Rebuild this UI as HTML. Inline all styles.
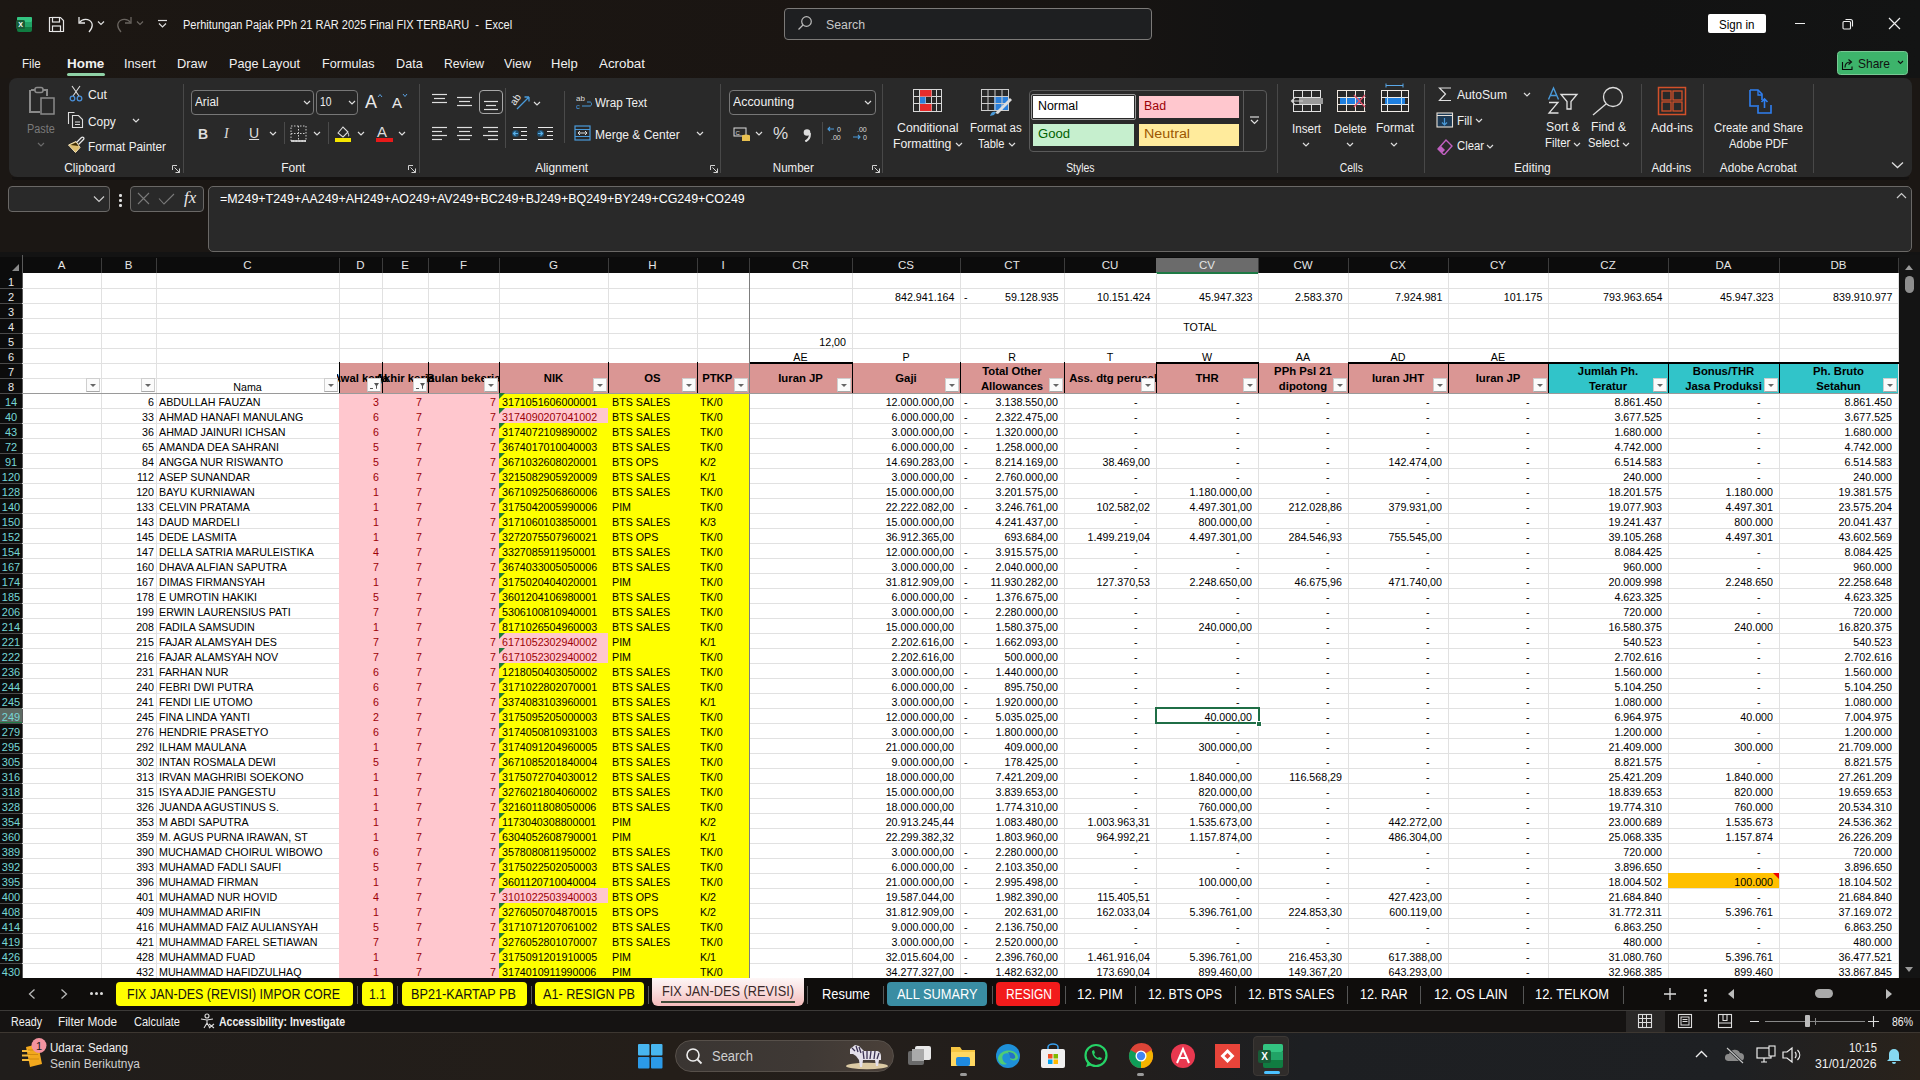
<!DOCTYPE html><html><head><meta charset="utf-8"><title>Excel</title><style>
*{margin:0;padding:0;box-sizing:border-box}
html,body{width:1920px;height:1080px;overflow:hidden;background:#1b1714;font-family:"Liberation Sans",sans-serif}
div,svg{position:absolute}
.t{white-space:nowrap;color:#fff;font-size:12px;line-height:14px}
.g{white-space:nowrap;color:#000;font-size:10.7px;line-height:16px;height:15px;overflow:hidden}
.r{text-align:right}
.c{text-align:center}
.b{font-weight:bold;font-size:11.3px}
.fb{background:#fbfbfb;width:13px;height:13px;border:1px solid #cfcfcf;border-bottom-color:#a8a8a8}
.fb:after{content:"";position:absolute;left:3px;top:4.5px;border-left:3px solid transparent;border-right:3px solid transparent;border-top:3.5px solid #666}
.sep{width:1px;background:#4a4a4a}
.chev{width:6px;height:6px;border-right:1.3px solid #ddd;border-bottom:1.3px solid #ddd;transform:rotate(45deg)}
</style></head><body>
<div style="left:0px;top:0px;width:1920px;height:78px;background:linear-gradient(90deg,#1c1713 0%,#1a1512 45%,#171412 58%,#121212 66%,#121212 85%,#131414 100%)"></div>
<svg style="left:16px;top:16px" width="16" height="16" viewBox="0 0 16 16"><rect x="1" y="1" width="15" height="15" rx="2" fill="#107c41"/><rect x="1" y="1" width="15" height="5" rx="1" fill="#33c481"/><rect x="1" y="6" width="15" height="5" fill="#21a366"/><rect x="0" y="4" width="9" height="9" rx="1.5" fill="#185c37"/><text x="4.5" y="11" font-size="7" font-weight="bold" fill="#fff" text-anchor="middle" font-family="Liberation Sans">X</text></svg>
<svg style="left:48px;top:16px" width="17" height="17" viewBox="0 0 17 17"><path d="M1.5 1.5h11l3 3v11h-14z" fill="none" stroke="#e6e6e6" stroke-width="1.2"/><rect x="4.5" y="1.5" width="7" height="4.5" fill="none" stroke="#e6e6e6" stroke-width="1.2"/><rect x="4.5" y="10" width="8" height="5.5" fill="none" stroke="#e6e6e6" stroke-width="1.2"/></svg>
<svg style="left:77px;top:15px" width="17" height="18" viewBox="0 0 17 18"><path d="M2 2v6h6" fill="none" stroke="#e6e6e6" stroke-width="1.3"/><path d="M2.5 7.5C5 3.5 12 3 14.5 7.5c2 3.5 0 6.5-2.5 9.5" fill="none" stroke="#e6e6e6" stroke-width="1.3"/></svg>
<svg style="left:97px;top:20px" width="8" height="6" viewBox="0 0 8 6"><path d="M1 1.5l3 3 3-3" fill="none" stroke="#ddd" stroke-width="1.2"/></svg>
<svg style="left:116px;top:15px" width="17" height="18" viewBox="0 0 17 18"><path d="M15 2v6H9" fill="none" stroke="#6a6560" stroke-width="1.3"/><path d="M14.5 7.5C12 3.5 5 3 2.5 7.5c-2 3.5 0 6.5 2.5 9.5" fill="none" stroke="#6a6560" stroke-width="1.3"/></svg>
<svg style="left:136px;top:20px" width="8" height="6" viewBox="0 0 8 6"><path d="M1 1.5l3 3 3-3" fill="none" stroke="#6a6560" stroke-width="1.2"/></svg>
<svg style="left:157px;top:19px" width="11" height="10" viewBox="0 0 11 10"><path d="M1 1.5h9" stroke="#ddd" stroke-width="1.2"/><path d="M2 4.5l3.5 3.5 3.5-3.5" fill="none" stroke="#ddd" stroke-width="1.2"/></svg>
<div class="t" style="left:183.00px;top:18.82px;font-size:12px;line-height:12px;color:#f2f2f2;transform:scaleX(0.9194);transform-origin:0 0;">Perhitungan Pajak PPh 21 RAR 2025 Final FIX TERBARU &nbsp;- &nbsp;Excel</div>
<div style="left:784px;top:8px;width:368px;height:32px;border:1px solid #7c7a78;border-radius:4px;background:#1e1f21"></div>
<svg style="left:797px;top:15px" width="16" height="16" viewBox="0 0 16 16"><circle cx="9.5" cy="6.5" r="4.8" fill="none" stroke="#bbb" stroke-width="1.2"/><path d="M6 10L1.5 14.5" stroke="#bbb" stroke-width="1.3"/></svg>
<div class="t" style="left:826.00px;top:18.52px;font-size:12px;line-height:12px;color:#c8c8c8;transform:scaleX(1.0259);transform-origin:0 0;">Search</div>
<div style="left:1708px;top:14px;width:58px;height:19px;background:#fff;border-radius:2px"></div>
<div class="t" style="left:1719.30px;top:18.72px;font-size:12px;line-height:12px;color:#000;transform:scaleX(0.9649);transform-origin:0 0;">Sign in</div>
<div style="left:1795px;top:23px;width:10px;height:1px;background:#eee"></div>
<svg style="left:1842px;top:18px" width="12" height="12" viewBox="0 0 12 12"><rect x="1" y="3.5" width="7.5" height="7.5" rx="1" fill="none" stroke="#eee" stroke-width="1.1"/><path d="M3.5 1.5h5a2 2 0 0 1 2 2v5" fill="none" stroke="#eee" stroke-width="1.1"/></svg>
<svg style="left:1888px;top:17px" width="13" height="13" viewBox="0 0 13 13"><path d="M1 1l11 11M12 1L1 12" stroke="#eee" stroke-width="1.2"/></svg>
<div class="t" style="left:22.00px;top:57.13px;font-size:13px;line-height:13px;color:#f0f0f0;transform:scaleX(0.8925);transform-origin:0 0;">File</div>
<div class="t" style="left:66.70px;top:57.13px;font-size:13px;line-height:13px;color:#f0f0f0;font-weight:bold;transform:scaleX(1.0325);transform-origin:0 0;">Home</div>
<div class="t" style="left:124.00px;top:57.13px;font-size:13px;line-height:13px;color:#f0f0f0;transform:scaleX(0.9749);transform-origin:0 0;">Insert</div>
<div class="t" style="left:177.00px;top:57.13px;font-size:13px;line-height:13px;color:#f0f0f0;transform:scaleX(0.9887);transform-origin:0 0;">Draw</div>
<div class="t" style="left:229.00px;top:57.13px;font-size:13px;line-height:13px;color:#f0f0f0;transform:scaleX(0.9722);transform-origin:0 0;">Page Layout</div>
<div class="t" style="left:322.00px;top:57.13px;font-size:13px;line-height:13px;color:#f0f0f0;transform:scaleX(0.9725);transform-origin:0 0;">Formulas</div>
<div class="t" style="left:396.00px;top:57.13px;font-size:13px;line-height:13px;color:#f0f0f0;transform:scaleX(0.9720);transform-origin:0 0;">Data</div>
<div class="t" style="left:444.00px;top:57.13px;font-size:13px;line-height:13px;color:#f0f0f0;transform:scaleX(0.9381);transform-origin:0 0;">Review</div>
<div class="t" style="left:504.00px;top:57.13px;font-size:13px;line-height:13px;color:#f0f0f0;transform:scaleX(0.9659);transform-origin:0 0;">View</div>
<div class="t" style="left:551.00px;top:57.13px;font-size:13px;line-height:13px;color:#f0f0f0;">Help</div>
<div class="t" style="left:599.00px;top:57.13px;font-size:13px;line-height:13px;color:#f0f0f0;transform:scaleX(1.0265);transform-origin:0 0;">Acrobat</div>
<div style="left:67px;top:73px;width:38px;height:3px;background:#8fd1a6;border-radius:2px"></div>
<div style="left:1837px;top:51px;width:71px;height:24px;background:#3db46b;border-radius:3.5px;border:1px solid #78c994"></div>
<svg style="left:1841px;top:57px" width="14" height="14" viewBox="0 0 14 14"><path d="M1.5 5v7.5h9.5V9.5" fill="none" stroke="#0a0a0a" stroke-width="1.1"/><path d="M4 10.5C4 7 6 5 9.5 5" fill="none" stroke="#0a0a0a" stroke-width="1.1"/><path d="M7.5 2.5l3 2.5-3 2.5" fill="none" stroke="#0a0a0a" stroke-width="1.1"/></svg>
<div class="t" style="left:1858.40px;top:57.23px;font-size:13px;line-height:13px;color:#111;transform:scaleX(0.9221);transform-origin:0 0;">Share</div>
<svg style="left:1897px;top:60px" width="7" height="5" viewBox="0 0 7 5"><path d="M1 1l2.5 2.5L6 1" fill="none" stroke="#111" stroke-width="1.1"/></svg>
<div style="left:9px;top:78px;width:1903px;height:99px;background:#292929;border-radius:8px"></div>
<div style="left:12px;top:177px;width:1897px;height:3px;background:#141211;border-radius:0 0 6px 6px"></div>
<div style="left:183px;top:84px;width:1px;height:89px;background:#484848"></div>
<div style="left:419px;top:84px;width:1px;height:89px;background:#484848"></div>
<div style="left:720px;top:84px;width:1px;height:89px;background:#484848"></div>
<div style="left:882px;top:84px;width:1px;height:89px;background:#484848"></div>
<div style="left:1277px;top:84px;width:1px;height:89px;background:#484848"></div>
<div style="left:1424px;top:84px;width:1px;height:89px;background:#484848"></div>
<div style="left:1641px;top:84px;width:1px;height:89px;background:#484848"></div>
<div style="left:1703px;top:84px;width:1px;height:89px;background:#484848"></div>
<div style="left:1813px;top:84px;width:1px;height:89px;background:#484848"></div>
<div class="t" style="left:63.81px;top:162.22px;font-size:12px;line-height:12px;color:#f0f0f0;transform:scaleX(0.9888);transform-origin:50% 0;">Clipboard</div>
<div class="t" style="left:281.20px;top:162.22px;font-size:12px;line-height:12px;color:#f0f0f0;">Font</div>
<div class="t" style="left:534.82px;top:162.22px;font-size:12px;line-height:12px;color:#f0f0f0;transform:scaleX(0.9933);transform-origin:50% 0;">Alignment</div>
<div class="t" style="left:772.16px;top:162.22px;font-size:12px;line-height:12px;color:#f0f0f0;transform:scaleX(0.9605);transform-origin:50% 0;">Number</div>
<div class="t" style="left:1064.16px;top:162.22px;font-size:12px;line-height:12px;color:#f0f0f0;transform:scaleX(0.8692);transform-origin:50% 0;">Styles</div>
<div class="t" style="left:1337.66px;top:162.22px;font-size:12px;line-height:12px;color:#f0f0f0;transform:scaleX(0.8618);transform-origin:50% 0;">Cells</div>
<div class="t" style="left:1514.06px;top:162.22px;font-size:12px;line-height:12px;color:#f0f0f0;">Editing</div>
<div class="t" style="left:1651.46px;top:162.22px;font-size:12px;line-height:12px;color:#f0f0f0;transform:scaleX(0.9733);transform-origin:50% 0;">Add-ins</div>
<div class="t" style="left:1719.15px;top:162.22px;font-size:12px;line-height:12px;color:#f0f0f0;transform:scaleX(0.9784);transform-origin:50% 0;">Adobe Acrobat</div>
<svg style="left:171px;top:164px" width="10" height="10" viewBox="0 0 10 10"><path d="M1.5 6V1.5H6" fill="none" stroke="#d0d0d0" stroke-width="1"/><path d="M3.5 3.5l5 5M8.5 4.5v4h-4" fill="none" stroke="#d0d0d0" stroke-width="1"/></svg>
<svg style="left:407px;top:164px" width="10" height="10" viewBox="0 0 10 10"><path d="M1.5 6V1.5H6" fill="none" stroke="#d0d0d0" stroke-width="1"/><path d="M3.5 3.5l5 5M8.5 4.5v4h-4" fill="none" stroke="#d0d0d0" stroke-width="1"/></svg>
<svg style="left:709px;top:164px" width="10" height="10" viewBox="0 0 10 10"><path d="M1.5 6V1.5H6" fill="none" stroke="#d0d0d0" stroke-width="1"/><path d="M3.5 3.5l5 5M8.5 4.5v4h-4" fill="none" stroke="#d0d0d0" stroke-width="1"/></svg>
<svg style="left:871px;top:164px" width="10" height="10" viewBox="0 0 10 10"><path d="M1.5 6V1.5H6" fill="none" stroke="#d0d0d0" stroke-width="1"/><path d="M3.5 3.5l5 5M8.5 4.5v4h-4" fill="none" stroke="#d0d0d0" stroke-width="1"/></svg>
<svg style="left:1891px;top:161px" width="13" height="8" viewBox="0 0 13 8"><path d="M1 1.5l5.5 5 5.5-5" fill="none" stroke="#ddd" stroke-width="1.3"/></svg>
<svg style="left:27px;top:86px" width="31" height="31" viewBox="0 0 31 31"><path d="M4 4h4M16 4h4v6" fill="none" stroke="#8a8a8a" stroke-width="2"/><rect x="8" y="1.5" width="8" height="5" rx="2" fill="none" stroke="#8a8a8a" stroke-width="1.6"/><path d="M3 4v22h10" fill="none" stroke="#8a8a8a" stroke-width="2"/><rect x="14" y="12" width="13" height="16" fill="none" stroke="#8a8a8a" stroke-width="1.5"/></svg>
<div class="t" style="left:27.40px;top:122.92px;font-size:12px;line-height:12px;color:#7a7a7a;transform:scaleX(0.9031);transform-origin:0 0;">Paste</div>
<svg style="left:37px;top:142px" width="8" height="5" viewBox="0 0 8 5"><path d="M1 1l3 3 3-3" fill="none" stroke="#6a6a6a" stroke-width="1.2"/></svg>
<svg style="left:69px;top:85px" width="14" height="17" viewBox="0 0 14 17"><path d="M3 1l7 10M11 1L4 11" stroke="#ddd" stroke-width="1.1"/><circle cx="3.5" cy="13.5" r="2.3" fill="none" stroke="#4a90d9" stroke-width="1.3"/><circle cx="10.5" cy="13.5" r="2.3" fill="none" stroke="#4a90d9" stroke-width="1.3"/></svg>
<div class="t" style="left:88.20px;top:89.12px;font-size:12px;line-height:12px;color:#f0f0f0;transform:scaleX(1.0176);transform-origin:0 0;">Cut</div>
<svg style="left:67px;top:111px" width="17" height="17" viewBox="0 0 17 17"><path d="M1.5 13V1.5h6" fill="none" stroke="#ddd" stroke-width="1.1"/><path d="M5.5 4.5h6l4 4v8h-10z" fill="none" stroke="#ddd" stroke-width="1.1"/><path d="M8 11h5M8 13.5h5" stroke="#ddd" stroke-width="1"/></svg>
<div class="t" style="left:88.20px;top:115.62px;font-size:12px;line-height:12px;color:#f0f0f0;transform:scaleX(0.9923);transform-origin:0 0;">Copy</div>
<svg style="left:132px;top:118px" width="8" height="5" viewBox="0 0 8 5"><path d="M1 1l3 3 3-3" fill="none" stroke="#ddd" stroke-width="1.2"/></svg>
<svg style="left:67px;top:136px" width="18" height="18" viewBox="0 0 18 18"><path d="M1.5 9L8.5 16.5L13 11.5L9 5.5z" fill="#dcbd6e" stroke="#f2e2b8" stroke-width="1"/><path d="M3.5 9L9 6.5L11.5 10z" fill="#3a2a05"/><path d="M9.5 6.5l5-5a1.3 1.3 0 0 1 2 2l-5 5" fill="none" stroke="#e8e8e8" stroke-width="1.3"/></svg>
<div class="t" style="left:88.20px;top:141.32px;font-size:12px;line-height:12px;color:#f0f0f0;transform:scaleX(0.9831);transform-origin:0 0;">Format Painter</div>
<div style="left:191px;top:90px;width:123px;height:25px;border:1px solid #777;border-radius:4px;background:#262626"></div>
<div class="t" style="left:194.70px;top:95.92px;font-size:12px;line-height:12px;color:#f0f0f0;transform:scaleX(0.9827);transform-origin:0 0;">Arial</div>
<svg style="left:303px;top:100px" width="8" height="5" viewBox="0 0 8 5"><path d="M1 1l3 3 3-3" fill="none" stroke="#ddd" stroke-width="1.2"/></svg>
<div style="left:316px;top:90px;width:42px;height:25px;border:1px solid #777;border-radius:4px;background:#262626"></div>
<div class="t" style="left:320.00px;top:95.92px;font-size:12px;line-height:12px;color:#f0f0f0;transform:scaleX(0.8618);transform-origin:0 0;">10</div>
<svg style="left:348px;top:100px" width="8" height="5" viewBox="0 0 8 5"><path d="M1 1l3 3 3-3" fill="none" stroke="#ddd" stroke-width="1.2"/></svg>
<div class="t" style="left:365px;top:93px;font-size:18px;line-height:18px;color:#e8e8e8">A</div>
<svg style="left:377px;top:93px" width="6" height="5" viewBox="0 0 6 5"><path d="M1 4l2-2.5L5 4" fill="none" stroke="#5aa0e0" stroke-width="1"/></svg>
<div class="t" style="left:392px;top:94.5px;font-size:15px;line-height:15px;color:#e8e8e8">A</div>
<svg style="left:402px;top:93px" width="6" height="5" viewBox="0 0 6 5"><path d="M1 1l2 2.5L5 1" fill="none" stroke="#5aa0e0" stroke-width="1"/></svg>
<div class="t" style="left:198px;top:126px;font-size:14px;line-height:16px;font-weight:bold;color:#ddd">B</div>
<div class="t" style="left:224px;top:126px;font-size:14px;line-height:16px;font-style:italic;font-family:'Liberation Serif',serif;color:#ddd">I</div>
<div class="t" style="left:249px;top:125px;font-size:14px;line-height:16px;color:#ddd;text-decoration:underline">U</div>
<svg style="left:269px;top:131px" width="8" height="5" viewBox="0 0 8 5"><path d="M1 1l3 3 3-3" fill="none" stroke="#ddd" stroke-width="1.2"/></svg>
<div style="left:284px;top:122px;width:1px;height:22px;background:#4a4a4a"></div>
<svg style="left:290px;top:125px" width="17" height="17" viewBox="0 0 17 17"><rect x="1" y="1" width="15" height="15" fill="none" stroke="#ccc" stroke-width="1" stroke-dasharray="1.5 1.5"/><path d="M8.5 1v15M1 8.5h15" stroke="#ccc" stroke-width="1" stroke-dasharray="1.5 1.5"/><path d="M1 16h15" stroke="#eee" stroke-width="1.5"/></svg>
<svg style="left:313px;top:131px" width="8" height="5" viewBox="0 0 8 5"><path d="M1 1l3 3 3-3" fill="none" stroke="#ddd" stroke-width="1.2"/></svg>
<div style="left:328px;top:122px;width:1px;height:22px;background:#4a4a4a"></div>
<svg style="left:334px;top:124px" width="18" height="20" viewBox="0 0 18 20"><path d="M4 9l5-6 5 5-5 5z" fill="none" stroke="#ddd" stroke-width="1.1"/><path d="M14 9c1 2 1 3 0 3.5" fill="none" stroke="#ddd" stroke-width="1"/><rect x="1" y="14" width="16" height="4" fill="#f5e600"/></svg>
<svg style="left:357px;top:131px" width="8" height="5" viewBox="0 0 8 5"><path d="M1 1l3 3 3-3" fill="none" stroke="#ddd" stroke-width="1.2"/></svg>
<div class="t" style="left:377px;top:124px;font-size:15px;line-height:15px;color:#ddd">A</div>
<div style="left:376px;top:138px;width:17px;height:4px;background:#e81a1a"></div>
<svg style="left:398px;top:131px" width="8" height="5" viewBox="0 0 8 5"><path d="M1 1l3 3 3-3" fill="none" stroke="#ddd" stroke-width="1.2"/></svg>
<svg style="left:432px;top:93px" width="16" height="14" viewBox="0 0 16 14"><path d="M0 1.5H15" stroke="#ddd" stroke-width="1.2"/><path d="M2 5.5H13" stroke="#ddd" stroke-width="1.2"/><path d="M0 9.5H15" stroke="#ddd" stroke-width="1.2"/></svg>
<svg style="left:457px;top:96px" width="16" height="14" viewBox="0 0 16 14"><path d="M0 1.5H15" stroke="#ddd" stroke-width="1.2"/><path d="M2 5.5H13" stroke="#ddd" stroke-width="1.2"/><path d="M0 9.5H15" stroke="#ddd" stroke-width="1.2"/></svg>
<div style="left:479px;top:90px;width:24px;height:24px;border:1.2px solid #a8a8a8;border-radius:4px"></div>
<svg style="left:484px;top:100px" width="16" height="14" viewBox="0 0 16 14"><path d="M0 1.5H14" stroke="#ddd" stroke-width="1.2"/><path d="M2 5.5H12" stroke="#ddd" stroke-width="1.2"/><path d="M0 9.5H14" stroke="#ddd" stroke-width="1.2"/></svg>
<div style="left:505px;top:88px;width:1px;height:60px;background:#4a4a4a"></div>
<svg style="left:511px;top:92px" width="21" height="19" viewBox="0 0 21 19"><text x="0" y="0" font-size="10" fill="#e8e8e8" font-family="Liberation Sans" transform="translate(4 14) rotate(-55)">ab</text><path d="M6 17L18 5M18 5h-4.5M18 5v4.5" fill="none" stroke="#4a9ad9" stroke-width="1.3"/></svg>
<svg style="left:533px;top:101px" width="8" height="5" viewBox="0 0 8 5"><path d="M1 1l3 3 3-3" fill="none" stroke="#ddd" stroke-width="1.2"/></svg>
<svg style="left:432px;top:126px" width="16" height="18" viewBox="0 0 16 18"><path d="M0 1.5H15" stroke="#ddd" stroke-width="1.2"/><path d="M0 5.5H10" stroke="#ddd" stroke-width="1.2"/><path d="M0 9.5H15" stroke="#ddd" stroke-width="1.2"/><path d="M0 13.5H10" stroke="#ddd" stroke-width="1.2"/></svg>
<svg style="left:457px;top:126px" width="16" height="18" viewBox="0 0 16 18"><path d="M0 1.5H15" stroke="#ddd" stroke-width="1.2"/><path d="M2 5.5H13" stroke="#ddd" stroke-width="1.2"/><path d="M0 9.5H15" stroke="#ddd" stroke-width="1.2"/><path d="M2 13.5H13" stroke="#ddd" stroke-width="1.2"/></svg>
<svg style="left:483px;top:126px" width="16" height="18" viewBox="0 0 16 18"><path d="M0 1.5H15" stroke="#ddd" stroke-width="1.2"/><path d="M5 5.5H15" stroke="#ddd" stroke-width="1.2"/><path d="M0 9.5H15" stroke="#ddd" stroke-width="1.2"/><path d="M5 13.5H15" stroke="#ddd" stroke-width="1.2"/></svg>
<svg style="left:511px;top:126px" width="17" height="16" viewBox="0 0 17 16"><path d="M2 1.5h14M10 5.5h6M10 9.5h6M2 13.5h14" stroke="#e8e8e8" stroke-width="1.1"/><circle cx="4.5" cy="7.5" r="3.5" fill="#1f4f70"/><path d="M7 7.5H2.5M4.5 5.5l-2 2 2 2" fill="none" stroke="#5ab0e8" stroke-width="1.2"/></svg>
<svg style="left:536px;top:126px" width="18" height="16" viewBox="0 0 18 16"><path d="M2 1.5h15M11 5.5h6M11 9.5h6M2 13.5h15" stroke="#e8e8e8" stroke-width="1.1"/><circle cx="4.5" cy="7.5" r="3.5" fill="#1f4f70"/><path d="M2 7.5h4.5M4.5 5.5l2 2-2 2" fill="none" stroke="#5ab0e8" stroke-width="1.2"/></svg>
<div style="left:564px;top:91px;width:1px;height:52px;background:#4a4a4a"></div>
<svg style="left:576px;top:94px" width="17" height="17" viewBox="0 0 17 17"><text x="0" y="7" font-size="8" fill="#ddd" font-family="Liberation Sans">ab</text><text x="0" y="15" font-size="8" fill="#4a9ad9" font-family="Liberation Sans">c</text><path d="M6 12h8c2 0 2-4 0-4h-3" fill="none" stroke="#4a9ad9" stroke-width="1"/></svg>
<div class="t" style="left:595.00px;top:96.72px;font-size:12px;line-height:12px;color:#f0f0f0;transform:scaleX(0.9708);transform-origin:0 0;">Wrap Text</div>
<svg style="left:574px;top:125px" width="17" height="16" viewBox="0 0 17 16"><rect x="1" y="1" width="15" height="14" fill="none" stroke="#4a9ad9" stroke-width="1.2"/><path d="M1 4.5h15M1 11.5h15" stroke="#4a9ad9" stroke-width="1"/><path d="M4 8h9M6 6l-2 2 2 2M11 6l2 2-2 2" fill="none" stroke="#ddd" stroke-width="1"/></svg>
<div class="t" style="left:595.00px;top:128.72px;font-size:12px;line-height:12px;color:#f0f0f0;">Merge &amp; Center</div>
<svg style="left:696px;top:131px" width="8" height="5" viewBox="0 0 8 5"><path d="M1 1l3 3 3-3" fill="none" stroke="#ddd" stroke-width="1.2"/></svg>
<div style="left:729px;top:90px;width:147px;height:25px;border:1px solid #777;border-radius:4px;background:#262626"></div>
<div class="t" style="left:732.50px;top:96.22px;font-size:12px;line-height:12px;color:#f0f0f0;transform:scaleX(1.0276);transform-origin:0 0;">Accounting</div>
<svg style="left:864px;top:100px" width="8" height="5" viewBox="0 0 8 5"><path d="M1 1l3 3 3-3" fill="none" stroke="#ddd" stroke-width="1.2"/></svg>
<svg style="left:733px;top:126px" width="18" height="16" viewBox="0 0 18 16"><rect x="1" y="2" width="12" height="8" fill="none" stroke="#ddd" stroke-width="1"/><text x="2.5" y="9" font-size="6" fill="#ddd" font-family="Liberation Sans">C</text><ellipse cx="13" cy="10" rx="4" ry="1.5" fill="#e8c050"/><rect x="9" y="10" width="8" height="5" fill="#e8c050"/></svg>
<svg style="left:755px;top:131px" width="8" height="5" viewBox="0 0 8 5"><path d="M1 1l3 3 3-3" fill="none" stroke="#ddd" stroke-width="1.2"/></svg>
<div class="t" style="left:773px;top:125px;font-size:17px;line-height:18px;color:#ddd">%</div>
<svg style="left:801px;top:128px" width="12" height="14" viewBox="0 0 12 14"><circle cx="6" cy="4.5" r="3.3" fill="#ddd"/><path d="M8.8 5c0.5 4-1.5 7-4.5 8.5" fill="none" stroke="#ddd" stroke-width="2"/></svg>
<div style="left:822px;top:122px;width:1px;height:22px;background:#4a4a4a"></div>
<svg style="left:827px;top:125px" width="19" height="17" viewBox="0 0 19 17"><path d="M7 4H1M3 2L1 4l2 2" fill="none" stroke="#4a9ad9" stroke-width="1.1"/><text x="10" y="7" font-size="7" fill="#ddd" font-family="Liberation Sans">0</text><text x="4" y="15" font-size="7" fill="#ddd" font-family="Liberation Sans">.00</text></svg>
<svg style="left:852px;top:125px" width="19" height="17" viewBox="0 0 19 17"><text x="5" y="7" font-size="7" fill="#ddd" font-family="Liberation Sans">.00</text><path d="M1 12h7M6 10l2 2-2 2" fill="none" stroke="#4a9ad9" stroke-width="1.1"/><text x="11" y="15" font-size="7" fill="#ddd" font-family="Liberation Sans">0</text></svg>
<svg style="left:913px;top:89px" width="30" height="24" viewBox="0 0 30 24"><rect x="0.5" y="0.5" width="28" height="22" fill="none" stroke="#d8d8d8"/><path d="M0 7.5h29M0 14.5h29M6.5 0v23M12.5 0v23M18.5 0v23M23.5 0v23" stroke="#d8d8d8" stroke-width="1"/><rect x="7" y="1" width="11.5" height="6.5" fill="#e52b2b"/><rect x="7" y="8" width="5.5" height="6.5" fill="#2b7fd9"/><rect x="7" y="15" width="11.5" height="7" fill="#e52b2b"/></svg>
<div class="t" style="left:897.00px;top:122.12px;font-size:12px;line-height:12px;color:#f0f0f0;transform:scaleX(1.0242);transform-origin:0 0;">Conditional</div>
<div class="t" style="left:893.20px;top:137.72px;font-size:12px;line-height:12px;color:#f0f0f0;transform:scaleX(1.0184);transform-origin:0 0;">Formatting</div>
<svg style="left:955px;top:142px" width="8" height="5" viewBox="0 0 8 5"><path d="M1 1l3 3 3-3" fill="none" stroke="#ddd" stroke-width="1.2"/></svg>
<svg style="left:981px;top:89px" width="33" height="28" viewBox="0 0 33 28"><rect x="0.5" y="0.5" width="27" height="21" fill="none" stroke="#ccc"/><rect x="13" y="8" width="14" height="13" fill="#2b7fd9"/><path d="M0 7.5h28M0 14.5h28M7 0v22M14 0v22M21 0v22" stroke="#ccc" stroke-width="1"/><path d="M14 24l15-15 2 2-14 14z" fill="#ddd"/><path d="M9 27c1-4 3-5 6-4l-2 3z" fill="#4a9ad9"/></svg>
<div class="t" style="left:970.40px;top:122.12px;font-size:12px;line-height:12px;color:#f0f0f0;transform:scaleX(0.9574);transform-origin:0 0;">Format as</div>
<div class="t" style="left:977.90px;top:137.72px;font-size:12px;line-height:12px;color:#f0f0f0;transform:scaleX(0.9237);transform-origin:0 0;">Table</div>
<svg style="left:1008px;top:142px" width="8" height="5" viewBox="0 0 8 5"><path d="M1 1l3 3 3-3" fill="none" stroke="#ddd" stroke-width="1.2"/></svg>
<div style="left:1029px;top:90px;width:238px;height:62px;border:1px solid #5a5a5a;border-radius:4px"></div>
<div style="left:1243px;top:90px;width:1px;height:62px;background:#5a5a5a"></div>
<div style="left:1031px;top:94px;width:105px;height:26px;border:1px solid #9a9a9a;border-radius:2px"></div>
<div style="left:1033px;top:96px;width:101px;height:22px;background:#fff"></div>
<div class="t" style="left:1037.50px;top:100.22px;font-size:12px;line-height:12px;color:#000;transform:scaleX(1.0339);transform-origin:0 0;">Normal</div>
<div style="left:1139px;top:96px;width:100px;height:22px;background:#ffc7ce"></div>
<div class="t" style="left:1143.50px;top:100.22px;font-size:12px;line-height:12px;color:#9c0006;transform:scaleX(1.0307);transform-origin:0 0;">Bad</div>
<div style="left:1033px;top:124px;width:101px;height:22px;background:#c6efce"></div>
<div class="t" style="left:1037.50px;top:128.22px;font-size:12px;line-height:12px;color:#006100;transform:scaleX(1.0905);transform-origin:0 0;">Good</div>
<div style="left:1139px;top:124px;width:100px;height:22px;background:#ffeb9c"></div>
<div class="t" style="left:1143.50px;top:128.22px;font-size:12px;line-height:12px;color:#9c5700;transform:scaleX(1.1890);transform-origin:0 0;">Neutral</div>
<svg style="left:1249px;top:116px" width="11" height="9" viewBox="0 0 11 9"><path d="M1 1h9" stroke="#ddd" stroke-width="1.2"/><path d="M2 4l3.5 3.5L9 4" fill="none" stroke="#ddd" stroke-width="1.2"/></svg>
<svg style="left:1290px;top:88px" width="34" height="30" viewBox="0 0 34 30"><path d="M3.5 2.5h27M3.5 9.5h27M3.5 16.5h27M3.5 23.5h27M3.5 2v22M12.5 2v22M21.5 2v22M30.5 2v22" stroke="#e0e0e0" stroke-width="1" fill="none"/><rect x="9" y="10" width="24" height="6" fill="#9a9a9a"/><path d="M13 13H1.5M5.5 9l-4 4 4 4" fill="none" stroke="#d0d0d0" stroke-width="1.2"/></svg>
<div class="t" style="left:1292.00px;top:123.02px;font-size:12px;line-height:12px;color:#f0f0f0;transform:scaleX(0.9667);transform-origin:0 0;">Insert</div>
<svg style="left:1302px;top:142px" width="8" height="5" viewBox="0 0 8 5"><path d="M1 1l3 3 3-3" fill="none" stroke="#ddd" stroke-width="1.2"/></svg>
<svg style="left:1336px;top:88px" width="34" height="30" viewBox="0 0 34 30"><path d="M1.5 2.5h28M1.5 9.5h28M1.5 16.5h28M1.5 23.5h28M1.5 2v22M10.5 2v22M19.5 2v22M28.5 2v22" stroke="#f0e8e0" stroke-width="1" fill="none"/><rect x="4" y="10" width="6" height="6" fill="#1e7fe0"/><rect x="11" y="10" width="8" height="6" fill="#1e7fe0"/><rect x="20" y="10" width="4" height="6" fill="#1e7fe0"/><path d="M18 7l11 12M29 7L18 19" stroke="#e0506a" stroke-width="1.3"/></svg>
<div class="t" style="left:1334.00px;top:123.02px;font-size:12px;line-height:12px;color:#f0f0f0;transform:scaleX(0.9398);transform-origin:0 0;">Delete</div>
<svg style="left:1346px;top:142px" width="8" height="5" viewBox="0 0 8 5"><path d="M1 1l3 3 3-3" fill="none" stroke="#ddd" stroke-width="1.2"/></svg>
<svg style="left:1380px;top:82px" width="34" height="30" viewBox="0 0 34 30"><path d="M6 3.5h17M6 1.5v4M23 1.5v4" stroke="#5aa8e8" stroke-width="1"/><rect x="1.5" y="8.5" width="27" height="21" fill="none" stroke="#f0ece8" stroke-width="1"/><path d="M1.5 15.5h27M1.5 22.5h27M7.5 8v22M21.5 8v22" stroke="#f0ece8" stroke-width="1"/><rect x="5" y="16" width="20" height="6" fill="#1e7fe0"/><path d="M7.5 15v8M21.5 15v8" stroke="#aee0ff" stroke-width="1"/></svg>
<div class="t" style="left:1376.00px;top:122.22px;font-size:12px;line-height:12px;color:#f0f0f0;">Format</div>
<svg style="left:1390px;top:142px" width="8" height="5" viewBox="0 0 8 5"><path d="M1 1l3 3 3-3" fill="none" stroke="#ddd" stroke-width="1.2"/></svg>
<svg style="left:1437px;top:86px" width="16" height="16" viewBox="0 0 16 16"><path d="M14 2H2.5l6 6-6 6.5H14" fill="none" stroke="#e0e0e0" stroke-width="1.2"/></svg>
<div class="t" style="left:1457.00px;top:88.82px;font-size:12px;line-height:12px;color:#f0f0f0;transform:scaleX(1.0133);transform-origin:0 0;">AutoSum</div>
<svg style="left:1523px;top:92px" width="8" height="5" viewBox="0 0 8 5"><path d="M1 1l3 3 3-3" fill="none" stroke="#ddd" stroke-width="1.2"/></svg>
<svg style="left:1436px;top:112px" width="18" height="16" viewBox="0 0 18 16"><rect x="1" y="1" width="15.5" height="14" fill="#1d3a55" stroke="#e8e0d8" stroke-width="1.1"/><path d="M1 3.5h15" stroke="#e8e0d8"/><path d="M8.5 6v7M6 10.5l2.5 2.5 2.5-2.5" fill="none" stroke="#4a9ad9" stroke-width="1.2"/></svg>
<div class="t" style="left:1457.00px;top:114.72px;font-size:12px;line-height:12px;color:#f0f0f0;transform:scaleX(0.9776);transform-origin:0 0;">Fill</div>
<svg style="left:1475px;top:118px" width="8" height="5" viewBox="0 0 8 5"><path d="M1 1l3 3 3-3" fill="none" stroke="#ddd" stroke-width="1.2"/></svg>
<svg style="left:1436px;top:138px" width="18" height="17" viewBox="0 0 18 17"><path d="M2 11l8-9 6 6-8 9z" fill="none" stroke="#c060c0" stroke-width="1.4"/><path d="M2 11l4 4 3-3-4-4z" fill="#c060c0"/></svg>
<div class="t" style="left:1457.00px;top:140.22px;font-size:12px;line-height:12px;color:#f0f0f0;transform:scaleX(0.9412);transform-origin:0 0;">Clear</div>
<svg style="left:1486px;top:144px" width="8" height="5" viewBox="0 0 8 5"><path d="M1 1l3 3 3-3" fill="none" stroke="#ddd" stroke-width="1.2"/></svg>
<svg style="left:1547px;top:86px" width="33" height="30" viewBox="0 0 33 30"><path d="M1.5 13.5L6.5 2l5 11.5M3.3 9.5h6.4" fill="none" stroke="#4a9ad9" stroke-width="1.4"/><path d="M2 16.5h9l-9 10.5h9.5" fill="none" stroke="#e0e0e0" stroke-width="1.3"/><path d="M14 8.5h16l-6 7v7.5h-4v-7.5z" fill="none" stroke="#e0e0e0" stroke-width="1.3"/></svg>
<div class="t" style="left:1546.00px;top:121.32px;font-size:12px;line-height:12px;color:#f0f0f0;transform:scaleX(1.0202);transform-origin:0 0;">Sort &amp;</div>
<div class="t" style="left:1544.50px;top:137.42px;font-size:12px;line-height:12px;color:#f0f0f0;transform:scaleX(0.9523);transform-origin:0 0;">Filter</div>
<svg style="left:1573px;top:142px" width="8" height="5" viewBox="0 0 8 5"><path d="M1 1l3 3 3-3" fill="none" stroke="#ddd" stroke-width="1.2"/></svg>
<svg style="left:1592px;top:86px" width="34" height="30" viewBox="0 0 34 30"><circle cx="21" cy="11" r="9.5" fill="none" stroke="#ddd" stroke-width="1.3"/><path d="M14 18L1 29" stroke="#ddd" stroke-width="1.3"/></svg>
<div class="t" style="left:1591.40px;top:121.32px;font-size:12px;line-height:12px;color:#f0f0f0;transform:scaleX(1.0095);transform-origin:0 0;">Find &amp;</div>
<div class="t" style="left:1588.00px;top:137.42px;font-size:12px;line-height:12px;color:#f0f0f0;transform:scaleX(0.9297);transform-origin:0 0;">Select</div>
<svg style="left:1622px;top:142px" width="8" height="5" viewBox="0 0 8 5"><path d="M1 1l3 3 3-3" fill="none" stroke="#ddd" stroke-width="1.2"/></svg>
<svg style="left:1657px;top:86px" width="30" height="30" viewBox="0 0 30 30"><rect x="1.5" y="1.5" width="27" height="27" fill="none" stroke="#d2502a" stroke-width="1.5"/><rect x="5" y="5" width="9" height="9" fill="none" stroke="#d2502a" stroke-width="1.3"/><rect x="16" y="5" width="9" height="9" fill="none" stroke="#d2502a" stroke-width="1.3"/><rect x="5" y="16" width="9" height="9" fill="none" stroke="#d2502a" stroke-width="1.3"/><rect x="16" y="16" width="9" height="9" fill="none" stroke="#d2502a" stroke-width="1.3"/></svg>
<div class="t" style="left:1651.00px;top:122.12px;font-size:12px;line-height:12px;color:#f0f0f0;transform:scaleX(1.0323);transform-origin:0 0;">Add-ins</div>
<svg style="left:1748px;top:88px" width="26" height="28" viewBox="0 0 26 28"><path d="M2 2h8l4 4v6M2 2v16h7" fill="none" stroke="#2f7ff0" stroke-width="1.6"/><path d="M10 2v5h4" fill="none" stroke="#2f7ff0" stroke-width="1.3"/><path d="M10 17v8h13v-8M16.5 11v9M13.5 14l3-3 3 3" fill="none" stroke="#2f7ff0" stroke-width="1.6"/></svg>
<div class="t" style="left:1714.00px;top:122.12px;font-size:12px;line-height:12px;color:#f0f0f0;transform:scaleX(0.9398);transform-origin:0 0;">Create and Share</div>
<div class="t" style="left:1729.00px;top:137.72px;font-size:12px;line-height:12px;color:#f0f0f0;transform:scaleX(0.9514);transform-origin:0 0;">Adobe PDF</div>
<div style="left:8px;top:186px;width:102px;height:26px;border:1px solid #6a6866;border-radius:4px;background:#292929"></div>
<svg style="left:93px;top:195px" width="12" height="8" viewBox="0 0 12 8"><path d="M1 1.5l5 5 5-5" fill="none" stroke="#ccc" stroke-width="1.2"/></svg>
<div style="left:119px;top:194px;width:2.5px;height:2.5px;background:#ddd;border-radius:50%"></div>
<div style="left:119px;top:199px;width:2.5px;height:2.5px;background:#ddd;border-radius:50%"></div>
<div style="left:119px;top:204px;width:2.5px;height:2.5px;background:#ddd;border-radius:50%"></div>
<div style="left:130px;top:186px;width:74px;height:26px;border:1px solid #6a6866;border-radius:4px;background:#292929"></div>
<svg style="left:137px;top:192px" width="13" height="13" viewBox="0 0 13 13"><path d="M1 1l11 11M12 1L1 12" stroke="#7a7a7a" stroke-width="1.1"/></svg>
<svg style="left:158px;top:193px" width="17" height="12" viewBox="0 0 17 12"><path d="M1 5.5l5 5.5L16 1" fill="none" stroke="#7a7a7a" stroke-width="1.1"/></svg>
<div class="t" style="left:184px;top:189px;font-family:'Liberation Serif',serif;font-size:17px;line-height:18px;color:#e8e8e8"><i>f</i><i>x</i></div>
<div style="left:208px;top:186px;width:1704px;height:66px;border:1px solid #6a6866;border-radius:5px;background:#292929"></div>
<div class="t" style="left:220.00px;top:193.48px;font-size:12.7px;line-height:12.7px;color:#fff;transform:scaleX(0.9792);transform-origin:0 0;">=M249+T249+AA249+AH249+AO249+AV249+BC249+BJ249+BQ249+BY249+CG249+CO249</div>
<svg style="left:1896px;top:192px" width="11" height="7" viewBox="0 0 11 7"><path d="M1 6l4.5-4.5L10 6" fill="none" stroke="#ccc" stroke-width="1.2"/></svg>
<div style="left:0px;top:252px;width:1920px;height:6px;background:#131313"></div>
<div style="left:0px;top:257px;width:1920px;height:16px;background:#0c0c0c"></div>
<div style="left:0px;top:273px;width:22px;height:705px;background:#0c0c0c"></div>
<div style="left:22px;top:273px;width:1876px;height:705px;background:#fff"></div>
<div style="left:1898px;top:255px;width:22px;height:723px;background:#141414"></div>
<svg style="left:1904px;top:263px" width="10" height="8" viewBox="0 0 10 8"><path d="M1 7l4-5 4 5z" fill="#9a9a9a"/></svg>
<div style="left:1905px;top:276px;width:9px;height:17px;background:#8e8e8e;border-radius:4.5px"></div>
<svg style="left:1904px;top:966px" width="10" height="8" viewBox="0 0 10 8"><path d="M1 1l4 5 4-5z" fill="#9a9a9a"/></svg>
<svg style="left:12px;top:263px" width="8" height="8" viewBox="0 0 8 8"><path d="M7 1v7H0z" fill="#8a8a8a"/></svg>
<div style="left:22px;top:255px;width:1px;height:723px;background:#5a5a5a"></div>
<div class="t" style="left:57.66px;top:260.26px;font-size:11.5px;line-height:11.5px;color:#e6e6e6;">A</div>
<div style="left:101px;top:258px;width:1px;height:15px;background:#3c3c3c"></div>
<div class="t" style="left:124.66px;top:260.26px;font-size:11.5px;line-height:11.5px;color:#e6e6e6;">B</div>
<div style="left:156px;top:258px;width:1px;height:15px;background:#3c3c3c"></div>
<div class="t" style="left:243.34px;top:260.26px;font-size:11.5px;line-height:11.5px;color:#e6e6e6;">C</div>
<div style="left:339px;top:258px;width:1px;height:15px;background:#3c3c3c"></div>
<div class="t" style="left:356.34px;top:260.26px;font-size:11.5px;line-height:11.5px;color:#e6e6e6;">D</div>
<div style="left:382px;top:258px;width:1px;height:15px;background:#3c3c3c"></div>
<div class="t" style="left:401.16px;top:260.26px;font-size:11.5px;line-height:11.5px;color:#e6e6e6;">E</div>
<div style="left:428px;top:258px;width:1px;height:15px;background:#3c3c3c"></div>
<div class="t" style="left:459.98px;top:260.26px;font-size:11.5px;line-height:11.5px;color:#e6e6e6;">F</div>
<div style="left:499px;top:258px;width:1px;height:15px;background:#3c3c3c"></div>
<div class="t" style="left:549.03px;top:260.26px;font-size:11.5px;line-height:11.5px;color:#e6e6e6;">G</div>
<div style="left:608px;top:258px;width:1px;height:15px;background:#3c3c3c"></div>
<div class="t" style="left:648.34px;top:260.26px;font-size:11.5px;line-height:11.5px;color:#e6e6e6;">H</div>
<div style="left:697px;top:258px;width:1px;height:15px;background:#3c3c3c"></div>
<div class="t" style="left:721.41px;top:260.26px;font-size:11.5px;line-height:11.5px;color:#e6e6e6;">I</div>
<div style="left:749px;top:258px;width:1px;height:15px;background:#3c3c3c"></div>
<div class="t" style="left:792.19px;top:260.26px;font-size:11.5px;line-height:11.5px;color:#e6e6e6;">CR</div>
<div style="left:852px;top:258px;width:1px;height:15px;background:#3c3c3c"></div>
<div class="t" style="left:898.01px;top:260.26px;font-size:11.5px;line-height:11.5px;color:#e6e6e6;">CS</div>
<div style="left:960px;top:258px;width:1px;height:15px;background:#3c3c3c"></div>
<div class="t" style="left:1004.33px;top:260.26px;font-size:11.5px;line-height:11.5px;color:#e6e6e6;">CT</div>
<div style="left:1064px;top:258px;width:1px;height:15px;background:#3c3c3c"></div>
<div class="t" style="left:1101.69px;top:260.26px;font-size:11.5px;line-height:11.5px;color:#e6e6e6;">CU</div>
<div style="left:1156px;top:258px;width:1px;height:15px;background:#3c3c3c"></div>
<div style="left:1156px;top:258px;width:103px;height:14px;background:#6b6b6b"></div>
<div style="left:1156px;top:272px;width:103px;height:2px;background:#1e7a45"></div>
<div class="t" style="left:1199.01px;top:260.26px;font-size:11.5px;line-height:11.5px;color:#e6e6e6;">CV</div>
<div style="left:1258px;top:258px;width:1px;height:15px;background:#3c3c3c"></div>
<div class="t" style="left:1293.41px;top:260.26px;font-size:11.5px;line-height:11.5px;color:#e6e6e6;">CW</div>
<div style="left:1348px;top:258px;width:1px;height:15px;background:#3c3c3c"></div>
<div class="t" style="left:1390.01px;top:260.26px;font-size:11.5px;line-height:11.5px;color:#e6e6e6;">CX</div>
<div style="left:1448px;top:258px;width:1px;height:15px;background:#3c3c3c"></div>
<div class="t" style="left:1490.01px;top:260.26px;font-size:11.5px;line-height:11.5px;color:#e6e6e6;">CY</div>
<div style="left:1548px;top:258px;width:1px;height:15px;background:#3c3c3c"></div>
<div class="t" style="left:1600.33px;top:260.26px;font-size:11.5px;line-height:11.5px;color:#e6e6e6;">CZ</div>
<div style="left:1668px;top:258px;width:1px;height:15px;background:#3c3c3c"></div>
<div class="t" style="left:1715.51px;top:260.26px;font-size:11.5px;line-height:11.5px;color:#e6e6e6;">DA</div>
<div style="left:1779px;top:258px;width:1px;height:15px;background:#3c3c3c"></div>
<div class="t" style="left:1830.51px;top:260.26px;font-size:11.5px;line-height:11.5px;color:#e6e6e6;">DB</div>
<div style="left:1898px;top:258px;width:1px;height:15px;background:#3c3c3c"></div>
<div class="t" style="left:7.94px;top:277.20px;font-size:11px;line-height:11px;color:#e8e8e8;">1</div>
<div style="left:0px;top:288px;width:22px;height:1px;background:#4a4a4a"></div>
<div class="t" style="left:7.94px;top:292.20px;font-size:11px;line-height:11px;color:#e8e8e8;">2</div>
<div style="left:0px;top:303px;width:22px;height:1px;background:#4a4a4a"></div>
<div class="t" style="left:7.94px;top:307.20px;font-size:11px;line-height:11px;color:#e8e8e8;">3</div>
<div style="left:0px;top:318px;width:22px;height:1px;background:#4a4a4a"></div>
<div class="t" style="left:7.94px;top:322.20px;font-size:11px;line-height:11px;color:#e8e8e8;">4</div>
<div style="left:0px;top:333px;width:22px;height:1px;background:#4a4a4a"></div>
<div class="t" style="left:7.94px;top:337.20px;font-size:11px;line-height:11px;color:#e8e8e8;">5</div>
<div style="left:0px;top:348px;width:22px;height:1px;background:#4a4a4a"></div>
<div class="t" style="left:7.94px;top:352.20px;font-size:11px;line-height:11px;color:#e8e8e8;">6</div>
<div style="left:0px;top:363px;width:22px;height:1px;background:#4a4a4a"></div>
<div class="t" style="left:7.94px;top:367.20px;font-size:11px;line-height:11px;color:#e8e8e8;">7</div>
<div style="left:0px;top:378px;width:22px;height:1px;background:#4a4a4a"></div>
<div class="t" style="left:7.94px;top:382.20px;font-size:11px;line-height:11px;color:#e8e8e8;">8</div>
<div style="left:0px;top:393px;width:22px;height:1px;background:#4a4a4a"></div>
<div class="t" style="left:4.88px;top:397.20px;font-size:11px;line-height:11px;color:#76d6d6;">14</div>
<div style="left:0px;top:408px;width:22px;height:1px;background:#4a4a4a"></div>
<div class="t" style="left:4.88px;top:412.20px;font-size:11px;line-height:11px;color:#76d6d6;">40</div>
<div style="left:0px;top:423px;width:22px;height:1px;background:#4a4a4a"></div>
<div class="t" style="left:4.88px;top:427.20px;font-size:11px;line-height:11px;color:#76d6d6;">43</div>
<div style="left:0px;top:438px;width:22px;height:1px;background:#4a4a4a"></div>
<div class="t" style="left:4.88px;top:442.20px;font-size:11px;line-height:11px;color:#76d6d6;">72</div>
<div style="left:0px;top:453px;width:22px;height:1px;background:#4a4a4a"></div>
<div class="t" style="left:4.88px;top:457.20px;font-size:11px;line-height:11px;color:#76d6d6;">91</div>
<div style="left:0px;top:468px;width:22px;height:1px;background:#4a4a4a"></div>
<div class="t" style="left:1.81px;top:472.20px;font-size:11px;line-height:11px;color:#76d6d6;">120</div>
<div style="left:0px;top:483px;width:22px;height:1px;background:#4a4a4a"></div>
<div class="t" style="left:1.81px;top:487.20px;font-size:11px;line-height:11px;color:#76d6d6;">128</div>
<div style="left:0px;top:498px;width:22px;height:1px;background:#4a4a4a"></div>
<div class="t" style="left:1.81px;top:502.20px;font-size:11px;line-height:11px;color:#76d6d6;">140</div>
<div style="left:0px;top:513px;width:22px;height:1px;background:#4a4a4a"></div>
<div class="t" style="left:1.81px;top:517.20px;font-size:11px;line-height:11px;color:#76d6d6;">150</div>
<div style="left:0px;top:528px;width:22px;height:1px;background:#4a4a4a"></div>
<div class="t" style="left:1.81px;top:532.20px;font-size:11px;line-height:11px;color:#76d6d6;">152</div>
<div style="left:0px;top:543px;width:22px;height:1px;background:#4a4a4a"></div>
<div class="t" style="left:1.81px;top:547.20px;font-size:11px;line-height:11px;color:#76d6d6;">154</div>
<div style="left:0px;top:558px;width:22px;height:1px;background:#4a4a4a"></div>
<div class="t" style="left:1.81px;top:562.20px;font-size:11px;line-height:11px;color:#76d6d6;">167</div>
<div style="left:0px;top:573px;width:22px;height:1px;background:#4a4a4a"></div>
<div class="t" style="left:1.81px;top:577.20px;font-size:11px;line-height:11px;color:#76d6d6;">174</div>
<div style="left:0px;top:588px;width:22px;height:1px;background:#4a4a4a"></div>
<div class="t" style="left:1.81px;top:592.20px;font-size:11px;line-height:11px;color:#76d6d6;">185</div>
<div style="left:0px;top:603px;width:22px;height:1px;background:#4a4a4a"></div>
<div class="t" style="left:1.81px;top:607.20px;font-size:11px;line-height:11px;color:#76d6d6;">206</div>
<div style="left:0px;top:618px;width:22px;height:1px;background:#4a4a4a"></div>
<div class="t" style="left:1.81px;top:622.20px;font-size:11px;line-height:11px;color:#76d6d6;">214</div>
<div style="left:0px;top:633px;width:22px;height:1px;background:#4a4a4a"></div>
<div class="t" style="left:1.81px;top:637.20px;font-size:11px;line-height:11px;color:#76d6d6;">221</div>
<div style="left:0px;top:648px;width:22px;height:1px;background:#4a4a4a"></div>
<div class="t" style="left:1.81px;top:652.20px;font-size:11px;line-height:11px;color:#76d6d6;">222</div>
<div style="left:0px;top:663px;width:22px;height:1px;background:#4a4a4a"></div>
<div class="t" style="left:1.81px;top:667.20px;font-size:11px;line-height:11px;color:#76d6d6;">236</div>
<div style="left:0px;top:678px;width:22px;height:1px;background:#4a4a4a"></div>
<div class="t" style="left:1.81px;top:682.20px;font-size:11px;line-height:11px;color:#76d6d6;">244</div>
<div style="left:0px;top:693px;width:22px;height:1px;background:#4a4a4a"></div>
<div class="t" style="left:1.81px;top:697.20px;font-size:11px;line-height:11px;color:#76d6d6;">245</div>
<div style="left:0px;top:708px;width:22px;height:1px;background:#4a4a4a"></div>
<div style="left:0px;top:708px;width:22px;height:15px;background:#5d6a63"></div>
<div style="left:0px;top:722px;width:22px;height:1px;background:#1e7a45"></div>
<div class="t" style="left:1.81px;top:712.20px;font-size:11px;line-height:11px;color:#76d6d6;">249</div>
<div style="left:0px;top:723px;width:22px;height:1px;background:#4a4a4a"></div>
<div class="t" style="left:1.81px;top:727.20px;font-size:11px;line-height:11px;color:#76d6d6;">279</div>
<div style="left:0px;top:738px;width:22px;height:1px;background:#4a4a4a"></div>
<div class="t" style="left:1.81px;top:742.20px;font-size:11px;line-height:11px;color:#76d6d6;">295</div>
<div style="left:0px;top:753px;width:22px;height:1px;background:#4a4a4a"></div>
<div class="t" style="left:1.81px;top:757.20px;font-size:11px;line-height:11px;color:#76d6d6;">305</div>
<div style="left:0px;top:768px;width:22px;height:1px;background:#4a4a4a"></div>
<div class="t" style="left:1.81px;top:772.20px;font-size:11px;line-height:11px;color:#76d6d6;">316</div>
<div style="left:0px;top:783px;width:22px;height:1px;background:#4a4a4a"></div>
<div class="t" style="left:1.81px;top:787.20px;font-size:11px;line-height:11px;color:#76d6d6;">318</div>
<div style="left:0px;top:798px;width:22px;height:1px;background:#4a4a4a"></div>
<div class="t" style="left:1.81px;top:802.20px;font-size:11px;line-height:11px;color:#76d6d6;">328</div>
<div style="left:0px;top:813px;width:22px;height:1px;background:#4a4a4a"></div>
<div class="t" style="left:1.81px;top:817.20px;font-size:11px;line-height:11px;color:#76d6d6;">354</div>
<div style="left:0px;top:828px;width:22px;height:1px;background:#4a4a4a"></div>
<div class="t" style="left:1.81px;top:832.20px;font-size:11px;line-height:11px;color:#76d6d6;">360</div>
<div style="left:0px;top:843px;width:22px;height:1px;background:#4a4a4a"></div>
<div class="t" style="left:1.81px;top:847.20px;font-size:11px;line-height:11px;color:#76d6d6;">389</div>
<div style="left:0px;top:858px;width:22px;height:1px;background:#4a4a4a"></div>
<div class="t" style="left:1.81px;top:862.20px;font-size:11px;line-height:11px;color:#76d6d6;">392</div>
<div style="left:0px;top:873px;width:22px;height:1px;background:#4a4a4a"></div>
<div class="t" style="left:1.81px;top:877.20px;font-size:11px;line-height:11px;color:#76d6d6;">395</div>
<div style="left:0px;top:888px;width:22px;height:1px;background:#4a4a4a"></div>
<div class="t" style="left:1.81px;top:892.20px;font-size:11px;line-height:11px;color:#76d6d6;">400</div>
<div style="left:0px;top:903px;width:22px;height:1px;background:#4a4a4a"></div>
<div class="t" style="left:1.81px;top:907.20px;font-size:11px;line-height:11px;color:#76d6d6;">408</div>
<div style="left:0px;top:918px;width:22px;height:1px;background:#4a4a4a"></div>
<div class="t" style="left:1.81px;top:922.20px;font-size:11px;line-height:11px;color:#76d6d6;">414</div>
<div style="left:0px;top:933px;width:22px;height:1px;background:#4a4a4a"></div>
<div class="t" style="left:1.81px;top:937.20px;font-size:11px;line-height:11px;color:#76d6d6;">419</div>
<div style="left:0px;top:948px;width:22px;height:1px;background:#4a4a4a"></div>
<div class="t" style="left:1.81px;top:952.20px;font-size:11px;line-height:11px;color:#76d6d6;">426</div>
<div style="left:0px;top:963px;width:22px;height:1px;background:#4a4a4a"></div>
<div class="t" style="left:1.81px;top:967.20px;font-size:11px;line-height:11px;color:#76d6d6;">430</div>
<div style="left:0px;top:978px;width:22px;height:1px;background:#4a4a4a"></div>
<div style="left:22px;top:288px;width:1876px;height:1px;background:#e1e1e1"></div>
<div style="left:22px;top:303px;width:1876px;height:1px;background:#e1e1e1"></div>
<div style="left:22px;top:318px;width:1876px;height:1px;background:#e1e1e1"></div>
<div style="left:22px;top:333px;width:1876px;height:1px;background:#e1e1e1"></div>
<div style="left:22px;top:348px;width:1876px;height:1px;background:#e1e1e1"></div>
<div style="left:22px;top:363px;width:1876px;height:1px;background:#e1e1e1"></div>
<div style="left:22px;top:378px;width:1876px;height:1px;background:#e1e1e1"></div>
<div style="left:22px;top:393px;width:1876px;height:1px;background:#e1e1e1"></div>
<div style="left:22px;top:408px;width:1876px;height:1px;background:#e1e1e1"></div>
<div style="left:22px;top:423px;width:1876px;height:1px;background:#e1e1e1"></div>
<div style="left:22px;top:438px;width:1876px;height:1px;background:#e1e1e1"></div>
<div style="left:22px;top:453px;width:1876px;height:1px;background:#e1e1e1"></div>
<div style="left:22px;top:468px;width:1876px;height:1px;background:#e1e1e1"></div>
<div style="left:22px;top:483px;width:1876px;height:1px;background:#e1e1e1"></div>
<div style="left:22px;top:498px;width:1876px;height:1px;background:#e1e1e1"></div>
<div style="left:22px;top:513px;width:1876px;height:1px;background:#e1e1e1"></div>
<div style="left:22px;top:528px;width:1876px;height:1px;background:#e1e1e1"></div>
<div style="left:22px;top:543px;width:1876px;height:1px;background:#e1e1e1"></div>
<div style="left:22px;top:558px;width:1876px;height:1px;background:#e1e1e1"></div>
<div style="left:22px;top:573px;width:1876px;height:1px;background:#e1e1e1"></div>
<div style="left:22px;top:588px;width:1876px;height:1px;background:#e1e1e1"></div>
<div style="left:22px;top:603px;width:1876px;height:1px;background:#e1e1e1"></div>
<div style="left:22px;top:618px;width:1876px;height:1px;background:#e1e1e1"></div>
<div style="left:22px;top:633px;width:1876px;height:1px;background:#e1e1e1"></div>
<div style="left:22px;top:648px;width:1876px;height:1px;background:#e1e1e1"></div>
<div style="left:22px;top:663px;width:1876px;height:1px;background:#e1e1e1"></div>
<div style="left:22px;top:678px;width:1876px;height:1px;background:#e1e1e1"></div>
<div style="left:22px;top:693px;width:1876px;height:1px;background:#e1e1e1"></div>
<div style="left:22px;top:708px;width:1876px;height:1px;background:#e1e1e1"></div>
<div style="left:22px;top:723px;width:1876px;height:1px;background:#e1e1e1"></div>
<div style="left:22px;top:738px;width:1876px;height:1px;background:#e1e1e1"></div>
<div style="left:22px;top:753px;width:1876px;height:1px;background:#e1e1e1"></div>
<div style="left:22px;top:768px;width:1876px;height:1px;background:#e1e1e1"></div>
<div style="left:22px;top:783px;width:1876px;height:1px;background:#e1e1e1"></div>
<div style="left:22px;top:798px;width:1876px;height:1px;background:#e1e1e1"></div>
<div style="left:22px;top:813px;width:1876px;height:1px;background:#e1e1e1"></div>
<div style="left:22px;top:828px;width:1876px;height:1px;background:#e1e1e1"></div>
<div style="left:22px;top:843px;width:1876px;height:1px;background:#e1e1e1"></div>
<div style="left:22px;top:858px;width:1876px;height:1px;background:#e1e1e1"></div>
<div style="left:22px;top:873px;width:1876px;height:1px;background:#e1e1e1"></div>
<div style="left:22px;top:888px;width:1876px;height:1px;background:#e1e1e1"></div>
<div style="left:22px;top:903px;width:1876px;height:1px;background:#e1e1e1"></div>
<div style="left:22px;top:918px;width:1876px;height:1px;background:#e1e1e1"></div>
<div style="left:22px;top:933px;width:1876px;height:1px;background:#e1e1e1"></div>
<div style="left:22px;top:948px;width:1876px;height:1px;background:#e1e1e1"></div>
<div style="left:22px;top:963px;width:1876px;height:1px;background:#e1e1e1"></div>
<div style="left:22px;top:978px;width:1876px;height:1px;background:#e1e1e1"></div>
<div style="left:101px;top:273px;width:1px;height:705px;background:#e1e1e1"></div>
<div style="left:156px;top:273px;width:1px;height:705px;background:#e1e1e1"></div>
<div style="left:339px;top:273px;width:1px;height:705px;background:#e1e1e1"></div>
<div style="left:382px;top:273px;width:1px;height:705px;background:#e1e1e1"></div>
<div style="left:428px;top:273px;width:1px;height:705px;background:#e1e1e1"></div>
<div style="left:499px;top:273px;width:1px;height:705px;background:#e1e1e1"></div>
<div style="left:608px;top:273px;width:1px;height:705px;background:#e1e1e1"></div>
<div style="left:697px;top:273px;width:1px;height:705px;background:#e1e1e1"></div>
<div style="left:749px;top:273px;width:1px;height:705px;background:#e1e1e1"></div>
<div style="left:852px;top:273px;width:1px;height:705px;background:#e1e1e1"></div>
<div style="left:960px;top:273px;width:1px;height:705px;background:#e1e1e1"></div>
<div style="left:1064px;top:273px;width:1px;height:705px;background:#e1e1e1"></div>
<div style="left:1156px;top:273px;width:1px;height:705px;background:#e1e1e1"></div>
<div style="left:1258px;top:273px;width:1px;height:705px;background:#e1e1e1"></div>
<div style="left:1348px;top:273px;width:1px;height:705px;background:#e1e1e1"></div>
<div style="left:1448px;top:273px;width:1px;height:705px;background:#e1e1e1"></div>
<div style="left:1548px;top:273px;width:1px;height:705px;background:#e1e1e1"></div>
<div style="left:1668px;top:273px;width:1px;height:705px;background:#e1e1e1"></div>
<div style="left:1779px;top:273px;width:1px;height:705px;background:#e1e1e1"></div>
<div style="left:1898px;top:273px;width:1px;height:705px;background:#e1e1e1"></div>
<div style="left:339px;top:393px;width:43px;height:585px;background:#ffc7ce"></div>
<div style="left:382px;top:393px;width:46px;height:585px;background:#ffc7ce"></div>
<div style="left:428px;top:393px;width:71px;height:585px;background:#ffc7ce"></div>
<div style="left:499px;top:393px;width:109px;height:585px;background:#ffff00"></div>
<div style="left:608px;top:393px;width:89px;height:585px;background:#ffff00"></div>
<div style="left:697px;top:393px;width:52px;height:585px;background:#ffff00"></div>
<div style="left:499px;top:408px;width:109px;height:15px;background:#ffc7ce"></div>
<div style="left:499px;top:633px;width:109px;height:15px;background:#ffc7ce"></div>
<div style="left:499px;top:648px;width:109px;height:15px;background:#ffc7ce"></div>
<div style="left:499px;top:888px;width:109px;height:15px;background:#ffc7ce"></div>
<div style="left:1668px;top:873px;width:111px;height:15px;background:#ffc000"></div>
<div style="left:339px;top:363px;width:43px;height:30px;background:#da9694"></div>
<div style="left:382px;top:363px;width:46px;height:30px;background:#da9694"></div>
<div style="left:428px;top:363px;width:71px;height:30px;background:#da9694"></div>
<div style="left:499px;top:363px;width:109px;height:30px;background:#da9694"></div>
<div style="left:608px;top:363px;width:89px;height:30px;background:#da9694"></div>
<div style="left:697px;top:363px;width:52px;height:30px;background:#da9694"></div>
<div style="left:749px;top:363px;width:103px;height:30px;background:#da9694"></div>
<div style="left:852px;top:363px;width:108px;height:30px;background:#da9694"></div>
<div style="left:960px;top:363px;width:104px;height:30px;background:#da9694"></div>
<div style="left:1064px;top:363px;width:92px;height:30px;background:#da9694"></div>
<div style="left:1156px;top:363px;width:102px;height:30px;background:#da9694"></div>
<div style="left:1258px;top:363px;width:90px;height:30px;background:#da9694"></div>
<div style="left:1348px;top:363px;width:100px;height:30px;background:#da9694"></div>
<div style="left:1448px;top:363px;width:100px;height:30px;background:#da9694"></div>
<div style="left:1548px;top:363px;width:120px;height:30px;background:#31c4c9"></div>
<div style="left:1668px;top:363px;width:111px;height:30px;background:#31c4c9"></div>
<div style="left:1779px;top:363px;width:119px;height:30px;background:#31c4c9"></div>
<div style="left:339px;top:362px;width:1px;height:31px;background:#000"></div>
<div style="left:382px;top:362px;width:1px;height:31px;background:#000"></div>
<div style="left:428px;top:362px;width:1px;height:31px;background:#000"></div>
<div style="left:499px;top:362px;width:1px;height:31px;background:#000"></div>
<div style="left:608px;top:362px;width:1px;height:31px;background:#000"></div>
<div style="left:697px;top:362px;width:1px;height:31px;background:#000"></div>
<div style="left:852px;top:362px;width:1px;height:31px;background:#000"></div>
<div style="left:960px;top:362px;width:1px;height:31px;background:#000"></div>
<div style="left:1064px;top:362px;width:1px;height:31px;background:#000"></div>
<div style="left:1156px;top:362px;width:1px;height:31px;background:#000"></div>
<div style="left:1258px;top:362px;width:1px;height:31px;background:#000"></div>
<div style="left:1348px;top:362px;width:1px;height:31px;background:#000"></div>
<div style="left:1448px;top:362px;width:1px;height:31px;background:#000"></div>
<div style="left:1548px;top:362px;width:1px;height:31px;background:#000"></div>
<div style="left:1668px;top:362px;width:1px;height:31px;background:#000"></div>
<div style="left:1779px;top:362px;width:1px;height:31px;background:#000"></div>
<div style="left:749px;top:362px;width:104px;height:2px;background:#000"></div>
<div style="left:1156px;top:362px;width:103px;height:2px;background:#000"></div>
<div style="left:1348px;top:362px;width:101px;height:2px;background:#000"></div>
<div style="left:1448px;top:362px;width:101px;height:2px;background:#000"></div>
<div style="left:1548px;top:362px;width:121px;height:2px;background:#000"></div>
<div style="left:1668px;top:362px;width:112px;height:2px;background:#000"></div>
<div style="left:1779px;top:362px;width:120px;height:2px;background:#000"></div>
<div style="left:749px;top:273px;width:1px;height:705px;background:#7d7d7d"></div>
<div style="left:22px;top:393px;width:1876px;height:1px;background:#9a9a9a"></div>
<div class="g" style="left:852px;top:289px;width:102.5px;text-align:right;">842.941.164</div>
<div class="g" style="left:960px;top:289px;width:98.5px;text-align:right;">59.128.935</div>
<div class="g" style="left:1064px;top:289px;width:86.5px;text-align:right;">10.151.424</div>
<div class="g" style="left:1156px;top:289px;width:96.5px;text-align:right;">45.947.323</div>
<div class="g" style="left:1258px;top:289px;width:84.5px;text-align:right;">2.583.370</div>
<div class="g" style="left:1348px;top:289px;width:94.5px;text-align:right;">7.924.981</div>
<div class="g" style="left:1448px;top:289px;width:94.5px;text-align:right;">101.175</div>
<div class="g" style="left:1548px;top:289px;width:114.5px;text-align:right;">793.963.654</div>
<div class="g" style="left:1668px;top:289px;width:105.5px;text-align:right;">45.947.323</div>
<div class="g" style="left:1779px;top:289px;width:113.5px;text-align:right;">839.910.977</div>
<div class="g" style="left:964px;top:289px;width:100px;">-</div>
<div class="g" style="left:1160px;top:319px;width:80px;text-align:center">TOTAL</div>
<div class="g" style="left:749px;top:334px;width:97px;text-align:right;">12,00</div>
<div class="g" style="left:749px;top:349px;width:103px;text-align:center;">AE</div>
<div class="g" style="left:852px;top:349px;width:108px;text-align:center;">P</div>
<div class="g" style="left:960px;top:349px;width:104px;text-align:center;">R</div>
<div class="g" style="left:1064px;top:349px;width:92px;text-align:center;">T</div>
<div class="g" style="left:1156px;top:349px;width:102px;text-align:center;">W</div>
<div class="g" style="left:1258px;top:349px;width:90px;text-align:center;">AA</div>
<div class="g" style="left:1348px;top:349px;width:100px;text-align:center;">AD</div>
<div class="g" style="left:1448px;top:349px;width:100px;text-align:center;">AE</div>
<div style="left:337px;top:363px;width:162px;height:30px;overflow:hidden"><div class="g b" style="left:-36.5px;top:7px;width:120px;text-align:center;overflow:visible">Awal kerja</div><div class="g b" style="left:8px;top:7px;width:120px;text-align:center;overflow:visible">Akhir kerja</div><div class="g b" style="left:66.5px;top:7px;width:120px;text-align:center;overflow:visible">Bulan bekerja</div></div>
<div style="left:339px;top:363px;width:1px;height:30px;background:#000"></div>
<div class="g b" style="left:499px;top:370px;width:109px;text-align:center;overflow:hidden">NIK</div>
<div class="g b" style="left:608px;top:370px;width:89px;text-align:center;overflow:hidden">OS</div>
<div class="g b" style="left:699px;top:370px;width:49px;overflow:hidden">&nbsp;PTKP</div>
<div class="g b" style="left:749px;top:370px;width:103px;text-align:center;overflow:hidden">Iuran JP</div>
<div class="g b" style="left:852px;top:370px;width:108px;text-align:center;overflow:hidden">Gaji</div>
<div class="g b" style="left:960px;top:363px;width:104px;text-align:center;overflow:hidden">Total Other</div>
<div class="g b" style="left:960px;top:378px;width:104px;text-align:center;overflow:hidden">Allowances</div>
<div class="g b" style="left:1066px;top:370px;width:90px;overflow:hidden;white-space:nowrap">&nbsp;Ass. dtg perusahaan</div>
<div class="g b" style="left:1156px;top:370px;width:102px;text-align:center;overflow:hidden">THR</div>
<div class="g b" style="left:1258px;top:363px;width:90px;text-align:center;overflow:hidden">PPh Psl 21</div>
<div class="g b" style="left:1258px;top:378px;width:90px;text-align:center;overflow:hidden">dipotong</div>
<div class="g b" style="left:1348px;top:370px;width:100px;text-align:center;overflow:hidden">Iuran JHT</div>
<div class="g b" style="left:1448px;top:370px;width:100px;text-align:center;overflow:hidden">Iuran JP</div>
<div class="g b" style="left:1548px;top:363px;width:120px;text-align:center;overflow:hidden">Jumlah Ph.</div>
<div class="g b" style="left:1548px;top:378px;width:120px;text-align:center;overflow:hidden">Teratur</div>
<div class="g b" style="left:1668px;top:363px;width:111px;text-align:center;overflow:hidden">Bonus/THR</div>
<div class="g b" style="left:1668px;top:378px;width:111px;text-align:center;overflow:hidden">Jasa Produksi</div>
<div class="g b" style="left:1779px;top:363px;width:119px;text-align:center;overflow:hidden">Ph. Bruto</div>
<div class="g b" style="left:1779px;top:378px;width:119px;text-align:center;overflow:hidden">Setahun</div>
<div class="g" style="left:156px;top:379px;width:183px;text-align:center">Nama</div>
<div class="fb" style="left:86px;top:378px;width:14px;height:14px"></div>
<div class="fb" style="left:141px;top:378px;width:14px;height:14px"></div>
<div class="fb" style="left:324px;top:378px;width:14px;height:14px"></div>
<div style="left:367px;top:378px;width:14px;height:14px;background:#fbfbfb;border:1px solid #cfcfcf;border-bottom-color:#a8a8a8"><svg style="left:0;top:0" width="13" height="13"><path d="M6 4h5l-2 3v3l-1-0.5V7z" fill="#555"/><path d="M2 9.5h3" stroke="#555" stroke-width="1"/></svg></div>
<div style="left:413px;top:378px;width:14px;height:14px;background:#fbfbfb;border:1px solid #cfcfcf;border-bottom-color:#a8a8a8"><svg style="left:0;top:0" width="13" height="13"><path d="M6 4h5l-2 3v3l-1-0.5V7z" fill="#555"/><path d="M2 9.5h3" stroke="#555" stroke-width="1"/></svg></div>
<div class="fb" style="left:484px;top:378px;width:14px;height:14px"></div>
<div class="fb" style="left:593px;top:378px;width:14px;height:14px"></div>
<div class="fb" style="left:682px;top:378px;width:14px;height:14px"></div>
<div class="fb" style="left:734px;top:378px;width:14px;height:14px"></div>
<div class="fb" style="left:837px;top:378px;width:14px;height:14px"></div>
<div class="fb" style="left:945px;top:378px;width:14px;height:14px"></div>
<div class="fb" style="left:1049px;top:378px;width:14px;height:14px"></div>
<div class="fb" style="left:1141px;top:378px;width:14px;height:14px"></div>
<div class="fb" style="left:1243px;top:378px;width:14px;height:14px"></div>
<div class="fb" style="left:1333px;top:378px;width:14px;height:14px"></div>
<div class="fb" style="left:1433px;top:378px;width:14px;height:14px"></div>
<div class="fb" style="left:1533px;top:378px;width:14px;height:14px"></div>
<div class="fb" style="left:1653px;top:378px;width:14px;height:14px"></div>
<div class="fb" style="left:1764px;top:378px;width:14px;height:14px"></div>
<div class="fb" style="left:1883px;top:378px;width:14px;height:14px"></div>
<div class="g" style="left:101px;top:394px;width:53px;text-align:right;">6</div>
<div class="g" style="left:159px;top:394px;width:180px;">ABDULLAH FAUZAN</div>
<div class="g" style="left:339px;top:394px;width:40px;text-align:right;color:#9c0006">3</div>
<div class="g" style="left:382px;top:394px;width:40px;text-align:right;color:#9c0006">7</div>
<div class="g" style="left:428px;top:394px;width:68px;text-align:right;color:#9c0006">7</div>
<div class="g" style="left:502px;top:394px;width:106px;">3171051606000001</div>
<svg style="left:499px;top:393px" width="6" height="6" viewBox="0 0 6 6"><path d="M0 0h6L0 6z" fill="#1e7a3c"/></svg>
<div class="g" style="left:612px;top:394px;width:85px;">BTS SALES</div>
<div class="g" style="left:700px;top:394px;width:49px;">TK/0</div>
<div class="g" style="left:852px;top:394px;width:102px;text-align:right;">12.000.000,00</div>
<div class="g" style="left:964px;top:394px;width:100px;">-</div>
<div class="g" style="left:960px;top:394px;width:98px;text-align:right;">3.138.550,00</div>
<div class="g" style="left:1064px;top:394px;width:73.5px;text-align:right;">-</div>
<div class="g" style="left:1156px;top:394px;width:83.5px;text-align:right;">-</div>
<div class="g" style="left:1258px;top:394px;width:71.5px;text-align:right;">-</div>
<div class="g" style="left:1348px;top:394px;width:81.5px;text-align:right;">-</div>
<div class="g" style="left:1448px;top:394px;width:81.5px;text-align:right;">-</div>
<div class="g" style="left:1548px;top:394px;width:114px;text-align:right;">8.861.450</div>
<div class="g" style="left:1668px;top:394px;width:92.5px;text-align:right;">-</div>
<div class="g" style="left:1779px;top:394px;width:113px;text-align:right;">8.861.450</div>
<div class="g" style="left:101px;top:409px;width:53px;text-align:right;">33</div>
<div class="g" style="left:159px;top:409px;width:180px;">AHMAD HANAFI MANULANG</div>
<div class="g" style="left:339px;top:409px;width:40px;text-align:right;color:#9c0006">6</div>
<div class="g" style="left:382px;top:409px;width:40px;text-align:right;color:#9c0006">7</div>
<div class="g" style="left:428px;top:409px;width:68px;text-align:right;color:#9c0006">7</div>
<div class="g" style="left:502px;top:409px;width:106px;color:#9c0006">3174090207041002</div>
<svg style="left:499px;top:408px" width="6" height="6" viewBox="0 0 6 6"><path d="M0 0h6L0 6z" fill="#1e7a3c"/></svg>
<div class="g" style="left:612px;top:409px;width:85px;">BTS SALES</div>
<div class="g" style="left:700px;top:409px;width:49px;">TK/0</div>
<div class="g" style="left:852px;top:409px;width:102px;text-align:right;">6.000.000,00</div>
<div class="g" style="left:964px;top:409px;width:100px;">-</div>
<div class="g" style="left:960px;top:409px;width:98px;text-align:right;">2.322.475,00</div>
<div class="g" style="left:1064px;top:409px;width:73.5px;text-align:right;">-</div>
<div class="g" style="left:1156px;top:409px;width:83.5px;text-align:right;">-</div>
<div class="g" style="left:1258px;top:409px;width:71.5px;text-align:right;">-</div>
<div class="g" style="left:1348px;top:409px;width:81.5px;text-align:right;">-</div>
<div class="g" style="left:1448px;top:409px;width:81.5px;text-align:right;">-</div>
<div class="g" style="left:1548px;top:409px;width:114px;text-align:right;">3.677.525</div>
<div class="g" style="left:1668px;top:409px;width:92.5px;text-align:right;">-</div>
<div class="g" style="left:1779px;top:409px;width:113px;text-align:right;">3.677.525</div>
<div class="g" style="left:101px;top:424px;width:53px;text-align:right;">36</div>
<div class="g" style="left:159px;top:424px;width:180px;">AHMAD JAINURI ICHSAN</div>
<div class="g" style="left:339px;top:424px;width:40px;text-align:right;color:#9c0006">6</div>
<div class="g" style="left:382px;top:424px;width:40px;text-align:right;color:#9c0006">7</div>
<div class="g" style="left:428px;top:424px;width:68px;text-align:right;color:#9c0006">7</div>
<div class="g" style="left:502px;top:424px;width:106px;">3174072109890002</div>
<svg style="left:499px;top:423px" width="6" height="6" viewBox="0 0 6 6"><path d="M0 0h6L0 6z" fill="#1e7a3c"/></svg>
<div class="g" style="left:612px;top:424px;width:85px;">BTS SALES</div>
<div class="g" style="left:700px;top:424px;width:49px;">TK/0</div>
<div class="g" style="left:852px;top:424px;width:102px;text-align:right;">3.000.000,00</div>
<div class="g" style="left:964px;top:424px;width:100px;">-</div>
<div class="g" style="left:960px;top:424px;width:98px;text-align:right;">1.320.000,00</div>
<div class="g" style="left:1064px;top:424px;width:73.5px;text-align:right;">-</div>
<div class="g" style="left:1156px;top:424px;width:83.5px;text-align:right;">-</div>
<div class="g" style="left:1258px;top:424px;width:71.5px;text-align:right;">-</div>
<div class="g" style="left:1348px;top:424px;width:81.5px;text-align:right;">-</div>
<div class="g" style="left:1448px;top:424px;width:81.5px;text-align:right;">-</div>
<div class="g" style="left:1548px;top:424px;width:114px;text-align:right;">1.680.000</div>
<div class="g" style="left:1668px;top:424px;width:92.5px;text-align:right;">-</div>
<div class="g" style="left:1779px;top:424px;width:113px;text-align:right;">1.680.000</div>
<div class="g" style="left:101px;top:439px;width:53px;text-align:right;">65</div>
<div class="g" style="left:159px;top:439px;width:180px;">AMANDA DEA SAHRANI</div>
<div class="g" style="left:339px;top:439px;width:40px;text-align:right;color:#9c0006">5</div>
<div class="g" style="left:382px;top:439px;width:40px;text-align:right;color:#9c0006">7</div>
<div class="g" style="left:428px;top:439px;width:68px;text-align:right;color:#9c0006">7</div>
<div class="g" style="left:502px;top:439px;width:106px;">3674017010040003</div>
<svg style="left:499px;top:438px" width="6" height="6" viewBox="0 0 6 6"><path d="M0 0h6L0 6z" fill="#1e7a3c"/></svg>
<div class="g" style="left:612px;top:439px;width:85px;">BTS SALES</div>
<div class="g" style="left:700px;top:439px;width:49px;">TK/0</div>
<div class="g" style="left:852px;top:439px;width:102px;text-align:right;">6.000.000,00</div>
<div class="g" style="left:964px;top:439px;width:100px;">-</div>
<div class="g" style="left:960px;top:439px;width:98px;text-align:right;">1.258.000,00</div>
<div class="g" style="left:1064px;top:439px;width:73.5px;text-align:right;">-</div>
<div class="g" style="left:1156px;top:439px;width:83.5px;text-align:right;">-</div>
<div class="g" style="left:1258px;top:439px;width:71.5px;text-align:right;">-</div>
<div class="g" style="left:1348px;top:439px;width:81.5px;text-align:right;">-</div>
<div class="g" style="left:1448px;top:439px;width:81.5px;text-align:right;">-</div>
<div class="g" style="left:1548px;top:439px;width:114px;text-align:right;">4.742.000</div>
<div class="g" style="left:1668px;top:439px;width:92.5px;text-align:right;">-</div>
<div class="g" style="left:1779px;top:439px;width:113px;text-align:right;">4.742.000</div>
<div class="g" style="left:101px;top:454px;width:53px;text-align:right;">84</div>
<div class="g" style="left:159px;top:454px;width:180px;">ANGGA NUR RISWANTO</div>
<div class="g" style="left:339px;top:454px;width:40px;text-align:right;color:#9c0006">5</div>
<div class="g" style="left:382px;top:454px;width:40px;text-align:right;color:#9c0006">7</div>
<div class="g" style="left:428px;top:454px;width:68px;text-align:right;color:#9c0006">7</div>
<div class="g" style="left:502px;top:454px;width:106px;">3671032608020001</div>
<svg style="left:499px;top:453px" width="6" height="6" viewBox="0 0 6 6"><path d="M0 0h6L0 6z" fill="#1e7a3c"/></svg>
<div class="g" style="left:612px;top:454px;width:85px;">BTS OPS</div>
<div class="g" style="left:700px;top:454px;width:49px;">K/2</div>
<div class="g" style="left:852px;top:454px;width:102px;text-align:right;">14.690.283,00</div>
<div class="g" style="left:964px;top:454px;width:100px;">-</div>
<div class="g" style="left:960px;top:454px;width:98px;text-align:right;">8.214.169,00</div>
<div class="g" style="left:1064px;top:454px;width:86px;text-align:right;">38.469,00</div>
<div class="g" style="left:1156px;top:454px;width:83.5px;text-align:right;">-</div>
<div class="g" style="left:1258px;top:454px;width:71.5px;text-align:right;">-</div>
<div class="g" style="left:1348px;top:454px;width:94px;text-align:right;">142.474,00</div>
<div class="g" style="left:1448px;top:454px;width:81.5px;text-align:right;">-</div>
<div class="g" style="left:1548px;top:454px;width:114px;text-align:right;">6.514.583</div>
<div class="g" style="left:1668px;top:454px;width:92.5px;text-align:right;">-</div>
<div class="g" style="left:1779px;top:454px;width:113px;text-align:right;">6.514.583</div>
<div class="g" style="left:101px;top:469px;width:53px;text-align:right;">112</div>
<div class="g" style="left:159px;top:469px;width:180px;">ASEP SUNANDAR</div>
<div class="g" style="left:339px;top:469px;width:40px;text-align:right;color:#9c0006">6</div>
<div class="g" style="left:382px;top:469px;width:40px;text-align:right;color:#9c0006">7</div>
<div class="g" style="left:428px;top:469px;width:68px;text-align:right;color:#9c0006">7</div>
<div class="g" style="left:502px;top:469px;width:106px;">3215082905920009</div>
<svg style="left:499px;top:468px" width="6" height="6" viewBox="0 0 6 6"><path d="M0 0h6L0 6z" fill="#1e7a3c"/></svg>
<div class="g" style="left:612px;top:469px;width:85px;">BTS SALES</div>
<div class="g" style="left:700px;top:469px;width:49px;">K/1</div>
<div class="g" style="left:852px;top:469px;width:102px;text-align:right;">3.000.000,00</div>
<div class="g" style="left:964px;top:469px;width:100px;">-</div>
<div class="g" style="left:960px;top:469px;width:98px;text-align:right;">2.760.000,00</div>
<div class="g" style="left:1064px;top:469px;width:73.5px;text-align:right;">-</div>
<div class="g" style="left:1156px;top:469px;width:83.5px;text-align:right;">-</div>
<div class="g" style="left:1258px;top:469px;width:71.5px;text-align:right;">-</div>
<div class="g" style="left:1348px;top:469px;width:81.5px;text-align:right;">-</div>
<div class="g" style="left:1448px;top:469px;width:81.5px;text-align:right;">-</div>
<div class="g" style="left:1548px;top:469px;width:114px;text-align:right;">240.000</div>
<div class="g" style="left:1668px;top:469px;width:92.5px;text-align:right;">-</div>
<div class="g" style="left:1779px;top:469px;width:113px;text-align:right;">240.000</div>
<div class="g" style="left:101px;top:484px;width:53px;text-align:right;">120</div>
<div class="g" style="left:159px;top:484px;width:180px;">BAYU KURNIAWAN</div>
<div class="g" style="left:339px;top:484px;width:40px;text-align:right;color:#9c0006">1</div>
<div class="g" style="left:382px;top:484px;width:40px;text-align:right;color:#9c0006">7</div>
<div class="g" style="left:428px;top:484px;width:68px;text-align:right;color:#9c0006">7</div>
<div class="g" style="left:502px;top:484px;width:106px;">3671092506860006</div>
<svg style="left:499px;top:483px" width="6" height="6" viewBox="0 0 6 6"><path d="M0 0h6L0 6z" fill="#1e7a3c"/></svg>
<div class="g" style="left:612px;top:484px;width:85px;">BTS SALES</div>
<div class="g" style="left:700px;top:484px;width:49px;">TK/0</div>
<div class="g" style="left:852px;top:484px;width:102px;text-align:right;">15.000.000,00</div>
<div class="g" style="left:960px;top:484px;width:98px;text-align:right;">3.201.575,00</div>
<div class="g" style="left:1064px;top:484px;width:73.5px;text-align:right;">-</div>
<div class="g" style="left:1156px;top:484px;width:96px;text-align:right;">1.180.000,00</div>
<div class="g" style="left:1258px;top:484px;width:71.5px;text-align:right;">-</div>
<div class="g" style="left:1348px;top:484px;width:81.5px;text-align:right;">-</div>
<div class="g" style="left:1448px;top:484px;width:81.5px;text-align:right;">-</div>
<div class="g" style="left:1548px;top:484px;width:114px;text-align:right;">18.201.575</div>
<div class="g" style="left:1668px;top:484px;width:105px;text-align:right;">1.180.000</div>
<div class="g" style="left:1779px;top:484px;width:113px;text-align:right;">19.381.575</div>
<div class="g" style="left:101px;top:499px;width:53px;text-align:right;">133</div>
<div class="g" style="left:159px;top:499px;width:180px;">CELVIN PRATAMA</div>
<div class="g" style="left:339px;top:499px;width:40px;text-align:right;color:#9c0006">1</div>
<div class="g" style="left:382px;top:499px;width:40px;text-align:right;color:#9c0006">7</div>
<div class="g" style="left:428px;top:499px;width:68px;text-align:right;color:#9c0006">7</div>
<div class="g" style="left:502px;top:499px;width:106px;">3175042005990006</div>
<svg style="left:499px;top:498px" width="6" height="6" viewBox="0 0 6 6"><path d="M0 0h6L0 6z" fill="#1e7a3c"/></svg>
<div class="g" style="left:612px;top:499px;width:85px;">PIM</div>
<div class="g" style="left:700px;top:499px;width:49px;">TK/0</div>
<div class="g" style="left:852px;top:499px;width:102px;text-align:right;">22.222.082,00</div>
<div class="g" style="left:964px;top:499px;width:100px;">-</div>
<div class="g" style="left:960px;top:499px;width:98px;text-align:right;">3.246.761,00</div>
<div class="g" style="left:1064px;top:499px;width:86px;text-align:right;">102.582,02</div>
<div class="g" style="left:1156px;top:499px;width:96px;text-align:right;">4.497.301,00</div>
<div class="g" style="left:1258px;top:499px;width:84px;text-align:right;">212.028,86</div>
<div class="g" style="left:1348px;top:499px;width:94px;text-align:right;">379.931,00</div>
<div class="g" style="left:1448px;top:499px;width:81.5px;text-align:right;">-</div>
<div class="g" style="left:1548px;top:499px;width:114px;text-align:right;">19.077.903</div>
<div class="g" style="left:1668px;top:499px;width:105px;text-align:right;">4.497.301</div>
<div class="g" style="left:1779px;top:499px;width:113px;text-align:right;">23.575.204</div>
<div class="g" style="left:101px;top:514px;width:53px;text-align:right;">143</div>
<div class="g" style="left:159px;top:514px;width:180px;">DAUD MARDELI</div>
<div class="g" style="left:339px;top:514px;width:40px;text-align:right;color:#9c0006">1</div>
<div class="g" style="left:382px;top:514px;width:40px;text-align:right;color:#9c0006">7</div>
<div class="g" style="left:428px;top:514px;width:68px;text-align:right;color:#9c0006">7</div>
<div class="g" style="left:502px;top:514px;width:106px;">3171060103850001</div>
<svg style="left:499px;top:513px" width="6" height="6" viewBox="0 0 6 6"><path d="M0 0h6L0 6z" fill="#1e7a3c"/></svg>
<div class="g" style="left:612px;top:514px;width:85px;">BTS SALES</div>
<div class="g" style="left:700px;top:514px;width:49px;">K/3</div>
<div class="g" style="left:852px;top:514px;width:102px;text-align:right;">15.000.000,00</div>
<div class="g" style="left:960px;top:514px;width:98px;text-align:right;">4.241.437,00</div>
<div class="g" style="left:1064px;top:514px;width:73.5px;text-align:right;">-</div>
<div class="g" style="left:1156px;top:514px;width:96px;text-align:right;">800.000,00</div>
<div class="g" style="left:1258px;top:514px;width:71.5px;text-align:right;">-</div>
<div class="g" style="left:1348px;top:514px;width:81.5px;text-align:right;">-</div>
<div class="g" style="left:1448px;top:514px;width:81.5px;text-align:right;">-</div>
<div class="g" style="left:1548px;top:514px;width:114px;text-align:right;">19.241.437</div>
<div class="g" style="left:1668px;top:514px;width:105px;text-align:right;">800.000</div>
<div class="g" style="left:1779px;top:514px;width:113px;text-align:right;">20.041.437</div>
<div class="g" style="left:101px;top:529px;width:53px;text-align:right;">145</div>
<div class="g" style="left:159px;top:529px;width:180px;">DEDE LASMITA</div>
<div class="g" style="left:339px;top:529px;width:40px;text-align:right;color:#9c0006">1</div>
<div class="g" style="left:382px;top:529px;width:40px;text-align:right;color:#9c0006">7</div>
<div class="g" style="left:428px;top:529px;width:68px;text-align:right;color:#9c0006">7</div>
<div class="g" style="left:502px;top:529px;width:106px;">3272075507960021</div>
<svg style="left:499px;top:528px" width="6" height="6" viewBox="0 0 6 6"><path d="M0 0h6L0 6z" fill="#1e7a3c"/></svg>
<div class="g" style="left:612px;top:529px;width:85px;">BTS OPS</div>
<div class="g" style="left:700px;top:529px;width:49px;">TK/0</div>
<div class="g" style="left:852px;top:529px;width:102px;text-align:right;">36.912.365,00</div>
<div class="g" style="left:960px;top:529px;width:98px;text-align:right;">693.684,00</div>
<div class="g" style="left:1064px;top:529px;width:86px;text-align:right;">1.499.219,04</div>
<div class="g" style="left:1156px;top:529px;width:96px;text-align:right;">4.497.301,00</div>
<div class="g" style="left:1258px;top:529px;width:84px;text-align:right;">284.546,93</div>
<div class="g" style="left:1348px;top:529px;width:94px;text-align:right;">755.545,00</div>
<div class="g" style="left:1448px;top:529px;width:81.5px;text-align:right;">-</div>
<div class="g" style="left:1548px;top:529px;width:114px;text-align:right;">39.105.268</div>
<div class="g" style="left:1668px;top:529px;width:105px;text-align:right;">4.497.301</div>
<div class="g" style="left:1779px;top:529px;width:113px;text-align:right;">43.602.569</div>
<div class="g" style="left:101px;top:544px;width:53px;text-align:right;">147</div>
<div class="g" style="left:159px;top:544px;width:180px;">DELLA SATRIA MARULEISTIKA</div>
<div class="g" style="left:339px;top:544px;width:40px;text-align:right;color:#9c0006">4</div>
<div class="g" style="left:382px;top:544px;width:40px;text-align:right;color:#9c0006">7</div>
<div class="g" style="left:428px;top:544px;width:68px;text-align:right;color:#9c0006">7</div>
<div class="g" style="left:502px;top:544px;width:106px;">3327085911950001</div>
<svg style="left:499px;top:543px" width="6" height="6" viewBox="0 0 6 6"><path d="M0 0h6L0 6z" fill="#1e7a3c"/></svg>
<div class="g" style="left:612px;top:544px;width:85px;">BTS SALES</div>
<div class="g" style="left:700px;top:544px;width:49px;">TK/0</div>
<div class="g" style="left:852px;top:544px;width:102px;text-align:right;">12.000.000,00</div>
<div class="g" style="left:964px;top:544px;width:100px;">-</div>
<div class="g" style="left:960px;top:544px;width:98px;text-align:right;">3.915.575,00</div>
<div class="g" style="left:1064px;top:544px;width:73.5px;text-align:right;">-</div>
<div class="g" style="left:1156px;top:544px;width:83.5px;text-align:right;">-</div>
<div class="g" style="left:1258px;top:544px;width:71.5px;text-align:right;">-</div>
<div class="g" style="left:1348px;top:544px;width:81.5px;text-align:right;">-</div>
<div class="g" style="left:1448px;top:544px;width:81.5px;text-align:right;">-</div>
<div class="g" style="left:1548px;top:544px;width:114px;text-align:right;">8.084.425</div>
<div class="g" style="left:1668px;top:544px;width:92.5px;text-align:right;">-</div>
<div class="g" style="left:1779px;top:544px;width:113px;text-align:right;">8.084.425</div>
<div class="g" style="left:101px;top:559px;width:53px;text-align:right;">160</div>
<div class="g" style="left:159px;top:559px;width:180px;">DHAVA ALFIAN SAPUTRA</div>
<div class="g" style="left:339px;top:559px;width:40px;text-align:right;color:#9c0006">7</div>
<div class="g" style="left:382px;top:559px;width:40px;text-align:right;color:#9c0006">7</div>
<div class="g" style="left:428px;top:559px;width:68px;text-align:right;color:#9c0006">7</div>
<div class="g" style="left:502px;top:559px;width:106px;">3674033005050006</div>
<svg style="left:499px;top:558px" width="6" height="6" viewBox="0 0 6 6"><path d="M0 0h6L0 6z" fill="#1e7a3c"/></svg>
<div class="g" style="left:612px;top:559px;width:85px;">BTS SALES</div>
<div class="g" style="left:700px;top:559px;width:49px;">TK/0</div>
<div class="g" style="left:852px;top:559px;width:102px;text-align:right;">3.000.000,00</div>
<div class="g" style="left:964px;top:559px;width:100px;">-</div>
<div class="g" style="left:960px;top:559px;width:98px;text-align:right;">2.040.000,00</div>
<div class="g" style="left:1064px;top:559px;width:73.5px;text-align:right;">-</div>
<div class="g" style="left:1156px;top:559px;width:83.5px;text-align:right;">-</div>
<div class="g" style="left:1258px;top:559px;width:71.5px;text-align:right;">-</div>
<div class="g" style="left:1348px;top:559px;width:81.5px;text-align:right;">-</div>
<div class="g" style="left:1448px;top:559px;width:81.5px;text-align:right;">-</div>
<div class="g" style="left:1548px;top:559px;width:114px;text-align:right;">960.000</div>
<div class="g" style="left:1668px;top:559px;width:92.5px;text-align:right;">-</div>
<div class="g" style="left:1779px;top:559px;width:113px;text-align:right;">960.000</div>
<div class="g" style="left:101px;top:574px;width:53px;text-align:right;">167</div>
<div class="g" style="left:159px;top:574px;width:180px;">DIMAS FIRMANSYAH</div>
<div class="g" style="left:339px;top:574px;width:40px;text-align:right;color:#9c0006">1</div>
<div class="g" style="left:382px;top:574px;width:40px;text-align:right;color:#9c0006">7</div>
<div class="g" style="left:428px;top:574px;width:68px;text-align:right;color:#9c0006">7</div>
<div class="g" style="left:502px;top:574px;width:106px;">3175020404020001</div>
<svg style="left:499px;top:573px" width="6" height="6" viewBox="0 0 6 6"><path d="M0 0h6L0 6z" fill="#1e7a3c"/></svg>
<div class="g" style="left:612px;top:574px;width:85px;">PIM</div>
<div class="g" style="left:700px;top:574px;width:49px;">TK/0</div>
<div class="g" style="left:852px;top:574px;width:102px;text-align:right;">31.812.909,00</div>
<div class="g" style="left:964px;top:574px;width:100px;">-</div>
<div class="g" style="left:960px;top:574px;width:98px;text-align:right;">11.930.282,00</div>
<div class="g" style="left:1064px;top:574px;width:86px;text-align:right;">127.370,53</div>
<div class="g" style="left:1156px;top:574px;width:96px;text-align:right;">2.248.650,00</div>
<div class="g" style="left:1258px;top:574px;width:84px;text-align:right;">46.675,96</div>
<div class="g" style="left:1348px;top:574px;width:94px;text-align:right;">471.740,00</div>
<div class="g" style="left:1448px;top:574px;width:81.5px;text-align:right;">-</div>
<div class="g" style="left:1548px;top:574px;width:114px;text-align:right;">20.009.998</div>
<div class="g" style="left:1668px;top:574px;width:105px;text-align:right;">2.248.650</div>
<div class="g" style="left:1779px;top:574px;width:113px;text-align:right;">22.258.648</div>
<div class="g" style="left:101px;top:589px;width:53px;text-align:right;">178</div>
<div class="g" style="left:159px;top:589px;width:180px;">E UMROTIN HAKIKI</div>
<div class="g" style="left:339px;top:589px;width:40px;text-align:right;color:#9c0006">5</div>
<div class="g" style="left:382px;top:589px;width:40px;text-align:right;color:#9c0006">7</div>
<div class="g" style="left:428px;top:589px;width:68px;text-align:right;color:#9c0006">7</div>
<div class="g" style="left:502px;top:589px;width:106px;">3601204106980001</div>
<svg style="left:499px;top:588px" width="6" height="6" viewBox="0 0 6 6"><path d="M0 0h6L0 6z" fill="#1e7a3c"/></svg>
<div class="g" style="left:612px;top:589px;width:85px;">BTS SALES</div>
<div class="g" style="left:700px;top:589px;width:49px;">TK/0</div>
<div class="g" style="left:852px;top:589px;width:102px;text-align:right;">6.000.000,00</div>
<div class="g" style="left:964px;top:589px;width:100px;">-</div>
<div class="g" style="left:960px;top:589px;width:98px;text-align:right;">1.376.675,00</div>
<div class="g" style="left:1064px;top:589px;width:73.5px;text-align:right;">-</div>
<div class="g" style="left:1156px;top:589px;width:83.5px;text-align:right;">-</div>
<div class="g" style="left:1258px;top:589px;width:71.5px;text-align:right;">-</div>
<div class="g" style="left:1348px;top:589px;width:81.5px;text-align:right;">-</div>
<div class="g" style="left:1448px;top:589px;width:81.5px;text-align:right;">-</div>
<div class="g" style="left:1548px;top:589px;width:114px;text-align:right;">4.623.325</div>
<div class="g" style="left:1668px;top:589px;width:92.5px;text-align:right;">-</div>
<div class="g" style="left:1779px;top:589px;width:113px;text-align:right;">4.623.325</div>
<div class="g" style="left:101px;top:604px;width:53px;text-align:right;">199</div>
<div class="g" style="left:159px;top:604px;width:180px;">ERWIN LAURENSIUS PATI</div>
<div class="g" style="left:339px;top:604px;width:40px;text-align:right;color:#9c0006">7</div>
<div class="g" style="left:382px;top:604px;width:40px;text-align:right;color:#9c0006">7</div>
<div class="g" style="left:428px;top:604px;width:68px;text-align:right;color:#9c0006">7</div>
<div class="g" style="left:502px;top:604px;width:106px;">5306100810940001</div>
<svg style="left:499px;top:603px" width="6" height="6" viewBox="0 0 6 6"><path d="M0 0h6L0 6z" fill="#1e7a3c"/></svg>
<div class="g" style="left:612px;top:604px;width:85px;">BTS SALES</div>
<div class="g" style="left:700px;top:604px;width:49px;">TK/0</div>
<div class="g" style="left:852px;top:604px;width:102px;text-align:right;">3.000.000,00</div>
<div class="g" style="left:964px;top:604px;width:100px;">-</div>
<div class="g" style="left:960px;top:604px;width:98px;text-align:right;">2.280.000,00</div>
<div class="g" style="left:1064px;top:604px;width:73.5px;text-align:right;">-</div>
<div class="g" style="left:1156px;top:604px;width:83.5px;text-align:right;">-</div>
<div class="g" style="left:1258px;top:604px;width:71.5px;text-align:right;">-</div>
<div class="g" style="left:1348px;top:604px;width:81.5px;text-align:right;">-</div>
<div class="g" style="left:1448px;top:604px;width:81.5px;text-align:right;">-</div>
<div class="g" style="left:1548px;top:604px;width:114px;text-align:right;">720.000</div>
<div class="g" style="left:1668px;top:604px;width:92.5px;text-align:right;">-</div>
<div class="g" style="left:1779px;top:604px;width:113px;text-align:right;">720.000</div>
<div class="g" style="left:101px;top:619px;width:53px;text-align:right;">208</div>
<div class="g" style="left:159px;top:619px;width:180px;">FADILA SAMSUDIN</div>
<div class="g" style="left:339px;top:619px;width:40px;text-align:right;color:#9c0006">1</div>
<div class="g" style="left:382px;top:619px;width:40px;text-align:right;color:#9c0006">7</div>
<div class="g" style="left:428px;top:619px;width:68px;text-align:right;color:#9c0006">7</div>
<div class="g" style="left:502px;top:619px;width:106px;">8171026504960003</div>
<svg style="left:499px;top:618px" width="6" height="6" viewBox="0 0 6 6"><path d="M0 0h6L0 6z" fill="#1e7a3c"/></svg>
<div class="g" style="left:612px;top:619px;width:85px;">BTS SALES</div>
<div class="g" style="left:700px;top:619px;width:49px;">TK/0</div>
<div class="g" style="left:852px;top:619px;width:102px;text-align:right;">15.000.000,00</div>
<div class="g" style="left:960px;top:619px;width:98px;text-align:right;">1.580.375,00</div>
<div class="g" style="left:1064px;top:619px;width:73.5px;text-align:right;">-</div>
<div class="g" style="left:1156px;top:619px;width:96px;text-align:right;">240.000,00</div>
<div class="g" style="left:1258px;top:619px;width:71.5px;text-align:right;">-</div>
<div class="g" style="left:1348px;top:619px;width:81.5px;text-align:right;">-</div>
<div class="g" style="left:1448px;top:619px;width:81.5px;text-align:right;">-</div>
<div class="g" style="left:1548px;top:619px;width:114px;text-align:right;">16.580.375</div>
<div class="g" style="left:1668px;top:619px;width:105px;text-align:right;">240.000</div>
<div class="g" style="left:1779px;top:619px;width:113px;text-align:right;">16.820.375</div>
<div class="g" style="left:101px;top:634px;width:53px;text-align:right;">215</div>
<div class="g" style="left:159px;top:634px;width:180px;">FAJAR ALAMSYAH DES</div>
<div class="g" style="left:339px;top:634px;width:40px;text-align:right;color:#9c0006">7</div>
<div class="g" style="left:382px;top:634px;width:40px;text-align:right;color:#9c0006">7</div>
<div class="g" style="left:428px;top:634px;width:68px;text-align:right;color:#9c0006">7</div>
<div class="g" style="left:502px;top:634px;width:106px;color:#9c0006">6171052302940002</div>
<svg style="left:499px;top:633px" width="6" height="6" viewBox="0 0 6 6"><path d="M0 0h6L0 6z" fill="#1e7a3c"/></svg>
<div class="g" style="left:612px;top:634px;width:85px;">PIM</div>
<div class="g" style="left:700px;top:634px;width:49px;">K/1</div>
<div class="g" style="left:852px;top:634px;width:102px;text-align:right;">2.202.616,00</div>
<div class="g" style="left:964px;top:634px;width:100px;">-</div>
<div class="g" style="left:960px;top:634px;width:98px;text-align:right;">1.662.093,00</div>
<div class="g" style="left:1064px;top:634px;width:73.5px;text-align:right;">-</div>
<div class="g" style="left:1156px;top:634px;width:83.5px;text-align:right;">-</div>
<div class="g" style="left:1258px;top:634px;width:71.5px;text-align:right;">-</div>
<div class="g" style="left:1348px;top:634px;width:81.5px;text-align:right;">-</div>
<div class="g" style="left:1448px;top:634px;width:81.5px;text-align:right;">-</div>
<div class="g" style="left:1548px;top:634px;width:114px;text-align:right;">540.523</div>
<div class="g" style="left:1668px;top:634px;width:92.5px;text-align:right;">-</div>
<div class="g" style="left:1779px;top:634px;width:113px;text-align:right;">540.523</div>
<div class="g" style="left:101px;top:649px;width:53px;text-align:right;">216</div>
<div class="g" style="left:159px;top:649px;width:180px;">FAJAR ALAMSYAH NOV</div>
<div class="g" style="left:339px;top:649px;width:40px;text-align:right;color:#9c0006">7</div>
<div class="g" style="left:382px;top:649px;width:40px;text-align:right;color:#9c0006">7</div>
<div class="g" style="left:428px;top:649px;width:68px;text-align:right;color:#9c0006">7</div>
<div class="g" style="left:502px;top:649px;width:106px;color:#9c0006">6171052302940002</div>
<svg style="left:499px;top:648px" width="6" height="6" viewBox="0 0 6 6"><path d="M0 0h6L0 6z" fill="#1e7a3c"/></svg>
<div class="g" style="left:612px;top:649px;width:85px;">PIM</div>
<div class="g" style="left:700px;top:649px;width:49px;">TK/0</div>
<div class="g" style="left:852px;top:649px;width:102px;text-align:right;">2.202.616,00</div>
<div class="g" style="left:960px;top:649px;width:98px;text-align:right;">500.000,00</div>
<div class="g" style="left:1064px;top:649px;width:73.5px;text-align:right;">-</div>
<div class="g" style="left:1156px;top:649px;width:83.5px;text-align:right;">-</div>
<div class="g" style="left:1258px;top:649px;width:71.5px;text-align:right;">-</div>
<div class="g" style="left:1348px;top:649px;width:81.5px;text-align:right;">-</div>
<div class="g" style="left:1448px;top:649px;width:81.5px;text-align:right;">-</div>
<div class="g" style="left:1548px;top:649px;width:114px;text-align:right;">2.702.616</div>
<div class="g" style="left:1668px;top:649px;width:92.5px;text-align:right;">-</div>
<div class="g" style="left:1779px;top:649px;width:113px;text-align:right;">2.702.616</div>
<div class="g" style="left:101px;top:664px;width:53px;text-align:right;">231</div>
<div class="g" style="left:159px;top:664px;width:180px;">FARHAN NUR</div>
<div class="g" style="left:339px;top:664px;width:40px;text-align:right;color:#9c0006">6</div>
<div class="g" style="left:382px;top:664px;width:40px;text-align:right;color:#9c0006">7</div>
<div class="g" style="left:428px;top:664px;width:68px;text-align:right;color:#9c0006">7</div>
<div class="g" style="left:502px;top:664px;width:106px;">1218050403050002</div>
<svg style="left:499px;top:663px" width="6" height="6" viewBox="0 0 6 6"><path d="M0 0h6L0 6z" fill="#1e7a3c"/></svg>
<div class="g" style="left:612px;top:664px;width:85px;">BTS SALES</div>
<div class="g" style="left:700px;top:664px;width:49px;">TK/0</div>
<div class="g" style="left:852px;top:664px;width:102px;text-align:right;">3.000.000,00</div>
<div class="g" style="left:964px;top:664px;width:100px;">-</div>
<div class="g" style="left:960px;top:664px;width:98px;text-align:right;">1.440.000,00</div>
<div class="g" style="left:1064px;top:664px;width:73.5px;text-align:right;">-</div>
<div class="g" style="left:1156px;top:664px;width:83.5px;text-align:right;">-</div>
<div class="g" style="left:1258px;top:664px;width:71.5px;text-align:right;">-</div>
<div class="g" style="left:1348px;top:664px;width:81.5px;text-align:right;">-</div>
<div class="g" style="left:1448px;top:664px;width:81.5px;text-align:right;">-</div>
<div class="g" style="left:1548px;top:664px;width:114px;text-align:right;">1.560.000</div>
<div class="g" style="left:1668px;top:664px;width:92.5px;text-align:right;">-</div>
<div class="g" style="left:1779px;top:664px;width:113px;text-align:right;">1.560.000</div>
<div class="g" style="left:101px;top:679px;width:53px;text-align:right;">240</div>
<div class="g" style="left:159px;top:679px;width:180px;">FEBRI DWI PUTRA</div>
<div class="g" style="left:339px;top:679px;width:40px;text-align:right;color:#9c0006">6</div>
<div class="g" style="left:382px;top:679px;width:40px;text-align:right;color:#9c0006">7</div>
<div class="g" style="left:428px;top:679px;width:68px;text-align:right;color:#9c0006">7</div>
<div class="g" style="left:502px;top:679px;width:106px;">3171022802070001</div>
<svg style="left:499px;top:678px" width="6" height="6" viewBox="0 0 6 6"><path d="M0 0h6L0 6z" fill="#1e7a3c"/></svg>
<div class="g" style="left:612px;top:679px;width:85px;">BTS SALES</div>
<div class="g" style="left:700px;top:679px;width:49px;">TK/0</div>
<div class="g" style="left:852px;top:679px;width:102px;text-align:right;">6.000.000,00</div>
<div class="g" style="left:964px;top:679px;width:100px;">-</div>
<div class="g" style="left:960px;top:679px;width:98px;text-align:right;">895.750,00</div>
<div class="g" style="left:1064px;top:679px;width:73.5px;text-align:right;">-</div>
<div class="g" style="left:1156px;top:679px;width:83.5px;text-align:right;">-</div>
<div class="g" style="left:1258px;top:679px;width:71.5px;text-align:right;">-</div>
<div class="g" style="left:1348px;top:679px;width:81.5px;text-align:right;">-</div>
<div class="g" style="left:1448px;top:679px;width:81.5px;text-align:right;">-</div>
<div class="g" style="left:1548px;top:679px;width:114px;text-align:right;">5.104.250</div>
<div class="g" style="left:1668px;top:679px;width:92.5px;text-align:right;">-</div>
<div class="g" style="left:1779px;top:679px;width:113px;text-align:right;">5.104.250</div>
<div class="g" style="left:101px;top:694px;width:53px;text-align:right;">241</div>
<div class="g" style="left:159px;top:694px;width:180px;">FENDI LIE UTOMO</div>
<div class="g" style="left:339px;top:694px;width:40px;text-align:right;color:#9c0006">6</div>
<div class="g" style="left:382px;top:694px;width:40px;text-align:right;color:#9c0006">7</div>
<div class="g" style="left:428px;top:694px;width:68px;text-align:right;color:#9c0006">7</div>
<div class="g" style="left:502px;top:694px;width:106px;">3374083103960001</div>
<svg style="left:499px;top:693px" width="6" height="6" viewBox="0 0 6 6"><path d="M0 0h6L0 6z" fill="#1e7a3c"/></svg>
<div class="g" style="left:612px;top:694px;width:85px;">BTS SALES</div>
<div class="g" style="left:700px;top:694px;width:49px;">K/1</div>
<div class="g" style="left:852px;top:694px;width:102px;text-align:right;">3.000.000,00</div>
<div class="g" style="left:964px;top:694px;width:100px;">-</div>
<div class="g" style="left:960px;top:694px;width:98px;text-align:right;">1.920.000,00</div>
<div class="g" style="left:1064px;top:694px;width:73.5px;text-align:right;">-</div>
<div class="g" style="left:1156px;top:694px;width:83.5px;text-align:right;">-</div>
<div class="g" style="left:1258px;top:694px;width:71.5px;text-align:right;">-</div>
<div class="g" style="left:1348px;top:694px;width:81.5px;text-align:right;">-</div>
<div class="g" style="left:1448px;top:694px;width:81.5px;text-align:right;">-</div>
<div class="g" style="left:1548px;top:694px;width:114px;text-align:right;">1.080.000</div>
<div class="g" style="left:1668px;top:694px;width:92.5px;text-align:right;">-</div>
<div class="g" style="left:1779px;top:694px;width:113px;text-align:right;">1.080.000</div>
<div class="g" style="left:101px;top:709px;width:53px;text-align:right;">245</div>
<div class="g" style="left:159px;top:709px;width:180px;">FINA LINDA YANTI</div>
<div class="g" style="left:339px;top:709px;width:40px;text-align:right;color:#9c0006">2</div>
<div class="g" style="left:382px;top:709px;width:40px;text-align:right;color:#9c0006">7</div>
<div class="g" style="left:428px;top:709px;width:68px;text-align:right;color:#9c0006">7</div>
<div class="g" style="left:502px;top:709px;width:106px;">3175095205000003</div>
<svg style="left:499px;top:708px" width="6" height="6" viewBox="0 0 6 6"><path d="M0 0h6L0 6z" fill="#1e7a3c"/></svg>
<div class="g" style="left:612px;top:709px;width:85px;">BTS SALES</div>
<div class="g" style="left:700px;top:709px;width:49px;">TK/0</div>
<div class="g" style="left:852px;top:709px;width:102px;text-align:right;">12.000.000,00</div>
<div class="g" style="left:964px;top:709px;width:100px;">-</div>
<div class="g" style="left:960px;top:709px;width:98px;text-align:right;">5.035.025,00</div>
<div class="g" style="left:1064px;top:709px;width:73.5px;text-align:right;">-</div>
<div class="g" style="left:1156px;top:709px;width:96px;text-align:right;">40.000,00</div>
<div class="g" style="left:1258px;top:709px;width:71.5px;text-align:right;">-</div>
<div class="g" style="left:1348px;top:709px;width:81.5px;text-align:right;">-</div>
<div class="g" style="left:1448px;top:709px;width:81.5px;text-align:right;">-</div>
<div class="g" style="left:1548px;top:709px;width:114px;text-align:right;">6.964.975</div>
<div class="g" style="left:1668px;top:709px;width:105px;text-align:right;">40.000</div>
<div class="g" style="left:1779px;top:709px;width:113px;text-align:right;">7.004.975</div>
<div class="g" style="left:101px;top:724px;width:53px;text-align:right;">276</div>
<div class="g" style="left:159px;top:724px;width:180px;">HENDRIE PRASETYO</div>
<div class="g" style="left:339px;top:724px;width:40px;text-align:right;color:#9c0006">6</div>
<div class="g" style="left:382px;top:724px;width:40px;text-align:right;color:#9c0006">7</div>
<div class="g" style="left:428px;top:724px;width:68px;text-align:right;color:#9c0006">7</div>
<div class="g" style="left:502px;top:724px;width:106px;">3174050810931003</div>
<svg style="left:499px;top:723px" width="6" height="6" viewBox="0 0 6 6"><path d="M0 0h6L0 6z" fill="#1e7a3c"/></svg>
<div class="g" style="left:612px;top:724px;width:85px;">BTS SALES</div>
<div class="g" style="left:700px;top:724px;width:49px;">TK/0</div>
<div class="g" style="left:852px;top:724px;width:102px;text-align:right;">3.000.000,00</div>
<div class="g" style="left:964px;top:724px;width:100px;">-</div>
<div class="g" style="left:960px;top:724px;width:98px;text-align:right;">1.800.000,00</div>
<div class="g" style="left:1064px;top:724px;width:73.5px;text-align:right;">-</div>
<div class="g" style="left:1156px;top:724px;width:83.5px;text-align:right;">-</div>
<div class="g" style="left:1258px;top:724px;width:71.5px;text-align:right;">-</div>
<div class="g" style="left:1348px;top:724px;width:81.5px;text-align:right;">-</div>
<div class="g" style="left:1448px;top:724px;width:81.5px;text-align:right;">-</div>
<div class="g" style="left:1548px;top:724px;width:114px;text-align:right;">1.200.000</div>
<div class="g" style="left:1668px;top:724px;width:92.5px;text-align:right;">-</div>
<div class="g" style="left:1779px;top:724px;width:113px;text-align:right;">1.200.000</div>
<div class="g" style="left:101px;top:739px;width:53px;text-align:right;">292</div>
<div class="g" style="left:159px;top:739px;width:180px;">ILHAM MAULANA</div>
<div class="g" style="left:339px;top:739px;width:40px;text-align:right;color:#9c0006">1</div>
<div class="g" style="left:382px;top:739px;width:40px;text-align:right;color:#9c0006">7</div>
<div class="g" style="left:428px;top:739px;width:68px;text-align:right;color:#9c0006">7</div>
<div class="g" style="left:502px;top:739px;width:106px;">3174091204960005</div>
<svg style="left:499px;top:738px" width="6" height="6" viewBox="0 0 6 6"><path d="M0 0h6L0 6z" fill="#1e7a3c"/></svg>
<div class="g" style="left:612px;top:739px;width:85px;">BTS SALES</div>
<div class="g" style="left:700px;top:739px;width:49px;">TK/0</div>
<div class="g" style="left:852px;top:739px;width:102px;text-align:right;">21.000.000,00</div>
<div class="g" style="left:960px;top:739px;width:98px;text-align:right;">409.000,00</div>
<div class="g" style="left:1064px;top:739px;width:73.5px;text-align:right;">-</div>
<div class="g" style="left:1156px;top:739px;width:96px;text-align:right;">300.000,00</div>
<div class="g" style="left:1258px;top:739px;width:71.5px;text-align:right;">-</div>
<div class="g" style="left:1348px;top:739px;width:81.5px;text-align:right;">-</div>
<div class="g" style="left:1448px;top:739px;width:81.5px;text-align:right;">-</div>
<div class="g" style="left:1548px;top:739px;width:114px;text-align:right;">21.409.000</div>
<div class="g" style="left:1668px;top:739px;width:105px;text-align:right;">300.000</div>
<div class="g" style="left:1779px;top:739px;width:113px;text-align:right;">21.709.000</div>
<div class="g" style="left:101px;top:754px;width:53px;text-align:right;">302</div>
<div class="g" style="left:159px;top:754px;width:180px;">INTAN ROSMALA DEWI</div>
<div class="g" style="left:339px;top:754px;width:40px;text-align:right;color:#9c0006">5</div>
<div class="g" style="left:382px;top:754px;width:40px;text-align:right;color:#9c0006">7</div>
<div class="g" style="left:428px;top:754px;width:68px;text-align:right;color:#9c0006">7</div>
<div class="g" style="left:502px;top:754px;width:106px;">3671085201840004</div>
<svg style="left:499px;top:753px" width="6" height="6" viewBox="0 0 6 6"><path d="M0 0h6L0 6z" fill="#1e7a3c"/></svg>
<div class="g" style="left:612px;top:754px;width:85px;">BTS SALES</div>
<div class="g" style="left:700px;top:754px;width:49px;">TK/0</div>
<div class="g" style="left:852px;top:754px;width:102px;text-align:right;">9.000.000,00</div>
<div class="g" style="left:964px;top:754px;width:100px;">-</div>
<div class="g" style="left:960px;top:754px;width:98px;text-align:right;">178.425,00</div>
<div class="g" style="left:1064px;top:754px;width:73.5px;text-align:right;">-</div>
<div class="g" style="left:1156px;top:754px;width:83.5px;text-align:right;">-</div>
<div class="g" style="left:1258px;top:754px;width:71.5px;text-align:right;">-</div>
<div class="g" style="left:1348px;top:754px;width:81.5px;text-align:right;">-</div>
<div class="g" style="left:1448px;top:754px;width:81.5px;text-align:right;">-</div>
<div class="g" style="left:1548px;top:754px;width:114px;text-align:right;">8.821.575</div>
<div class="g" style="left:1668px;top:754px;width:92.5px;text-align:right;">-</div>
<div class="g" style="left:1779px;top:754px;width:113px;text-align:right;">8.821.575</div>
<div class="g" style="left:101px;top:769px;width:53px;text-align:right;">313</div>
<div class="g" style="left:159px;top:769px;width:180px;">IRVAN MAGHRIBI SOEKONO</div>
<div class="g" style="left:339px;top:769px;width:40px;text-align:right;color:#9c0006">1</div>
<div class="g" style="left:382px;top:769px;width:40px;text-align:right;color:#9c0006">7</div>
<div class="g" style="left:428px;top:769px;width:68px;text-align:right;color:#9c0006">7</div>
<div class="g" style="left:502px;top:769px;width:106px;">3175072704030012</div>
<svg style="left:499px;top:768px" width="6" height="6" viewBox="0 0 6 6"><path d="M0 0h6L0 6z" fill="#1e7a3c"/></svg>
<div class="g" style="left:612px;top:769px;width:85px;">BTS SALES</div>
<div class="g" style="left:700px;top:769px;width:49px;">TK/0</div>
<div class="g" style="left:852px;top:769px;width:102px;text-align:right;">18.000.000,00</div>
<div class="g" style="left:960px;top:769px;width:98px;text-align:right;">7.421.209,00</div>
<div class="g" style="left:1064px;top:769px;width:73.5px;text-align:right;">-</div>
<div class="g" style="left:1156px;top:769px;width:96px;text-align:right;">1.840.000,00</div>
<div class="g" style="left:1258px;top:769px;width:84px;text-align:right;">116.568,29</div>
<div class="g" style="left:1348px;top:769px;width:81.5px;text-align:right;">-</div>
<div class="g" style="left:1448px;top:769px;width:81.5px;text-align:right;">-</div>
<div class="g" style="left:1548px;top:769px;width:114px;text-align:right;">25.421.209</div>
<div class="g" style="left:1668px;top:769px;width:105px;text-align:right;">1.840.000</div>
<div class="g" style="left:1779px;top:769px;width:113px;text-align:right;">27.261.209</div>
<div class="g" style="left:101px;top:784px;width:53px;text-align:right;">315</div>
<div class="g" style="left:159px;top:784px;width:180px;">ISYA ADJIE PANGESTU</div>
<div class="g" style="left:339px;top:784px;width:40px;text-align:right;color:#9c0006">1</div>
<div class="g" style="left:382px;top:784px;width:40px;text-align:right;color:#9c0006">7</div>
<div class="g" style="left:428px;top:784px;width:68px;text-align:right;color:#9c0006">7</div>
<div class="g" style="left:502px;top:784px;width:106px;">3276021804060002</div>
<svg style="left:499px;top:783px" width="6" height="6" viewBox="0 0 6 6"><path d="M0 0h6L0 6z" fill="#1e7a3c"/></svg>
<div class="g" style="left:612px;top:784px;width:85px;">BTS SALES</div>
<div class="g" style="left:700px;top:784px;width:49px;">TK/0</div>
<div class="g" style="left:852px;top:784px;width:102px;text-align:right;">15.000.000,00</div>
<div class="g" style="left:960px;top:784px;width:98px;text-align:right;">3.839.653,00</div>
<div class="g" style="left:1064px;top:784px;width:73.5px;text-align:right;">-</div>
<div class="g" style="left:1156px;top:784px;width:96px;text-align:right;">820.000,00</div>
<div class="g" style="left:1258px;top:784px;width:71.5px;text-align:right;">-</div>
<div class="g" style="left:1348px;top:784px;width:81.5px;text-align:right;">-</div>
<div class="g" style="left:1448px;top:784px;width:81.5px;text-align:right;">-</div>
<div class="g" style="left:1548px;top:784px;width:114px;text-align:right;">18.839.653</div>
<div class="g" style="left:1668px;top:784px;width:105px;text-align:right;">820.000</div>
<div class="g" style="left:1779px;top:784px;width:113px;text-align:right;">19.659.653</div>
<div class="g" style="left:101px;top:799px;width:53px;text-align:right;">326</div>
<div class="g" style="left:159px;top:799px;width:180px;">JUANDA AGUSTINUS S.</div>
<div class="g" style="left:339px;top:799px;width:40px;text-align:right;color:#9c0006">1</div>
<div class="g" style="left:382px;top:799px;width:40px;text-align:right;color:#9c0006">7</div>
<div class="g" style="left:428px;top:799px;width:68px;text-align:right;color:#9c0006">7</div>
<div class="g" style="left:502px;top:799px;width:106px;">3216011808050006</div>
<svg style="left:499px;top:798px" width="6" height="6" viewBox="0 0 6 6"><path d="M0 0h6L0 6z" fill="#1e7a3c"/></svg>
<div class="g" style="left:612px;top:799px;width:85px;">BTS SALES</div>
<div class="g" style="left:700px;top:799px;width:49px;">TK/0</div>
<div class="g" style="left:852px;top:799px;width:102px;text-align:right;">18.000.000,00</div>
<div class="g" style="left:960px;top:799px;width:98px;text-align:right;">1.774.310,00</div>
<div class="g" style="left:1064px;top:799px;width:73.5px;text-align:right;">-</div>
<div class="g" style="left:1156px;top:799px;width:96px;text-align:right;">760.000,00</div>
<div class="g" style="left:1258px;top:799px;width:71.5px;text-align:right;">-</div>
<div class="g" style="left:1348px;top:799px;width:81.5px;text-align:right;">-</div>
<div class="g" style="left:1448px;top:799px;width:81.5px;text-align:right;">-</div>
<div class="g" style="left:1548px;top:799px;width:114px;text-align:right;">19.774.310</div>
<div class="g" style="left:1668px;top:799px;width:105px;text-align:right;">760.000</div>
<div class="g" style="left:1779px;top:799px;width:113px;text-align:right;">20.534.310</div>
<div class="g" style="left:101px;top:814px;width:53px;text-align:right;">353</div>
<div class="g" style="left:159px;top:814px;width:180px;">M ABDI SAPUTRA</div>
<div class="g" style="left:339px;top:814px;width:40px;text-align:right;color:#9c0006">1</div>
<div class="g" style="left:382px;top:814px;width:40px;text-align:right;color:#9c0006">7</div>
<div class="g" style="left:428px;top:814px;width:68px;text-align:right;color:#9c0006">7</div>
<div class="g" style="left:502px;top:814px;width:106px;">1173040308800001</div>
<svg style="left:499px;top:813px" width="6" height="6" viewBox="0 0 6 6"><path d="M0 0h6L0 6z" fill="#1e7a3c"/></svg>
<div class="g" style="left:612px;top:814px;width:85px;">PIM</div>
<div class="g" style="left:700px;top:814px;width:49px;">K/2</div>
<div class="g" style="left:852px;top:814px;width:102px;text-align:right;">20.913.245,44</div>
<div class="g" style="left:960px;top:814px;width:98px;text-align:right;">1.083.480,00</div>
<div class="g" style="left:1064px;top:814px;width:86px;text-align:right;">1.003.963,31</div>
<div class="g" style="left:1156px;top:814px;width:96px;text-align:right;">1.535.673,00</div>
<div class="g" style="left:1258px;top:814px;width:71.5px;text-align:right;">-</div>
<div class="g" style="left:1348px;top:814px;width:94px;text-align:right;">442.272,00</div>
<div class="g" style="left:1448px;top:814px;width:81.5px;text-align:right;">-</div>
<div class="g" style="left:1548px;top:814px;width:114px;text-align:right;">23.000.689</div>
<div class="g" style="left:1668px;top:814px;width:105px;text-align:right;">1.535.673</div>
<div class="g" style="left:1779px;top:814px;width:113px;text-align:right;">24.536.362</div>
<div class="g" style="left:101px;top:829px;width:53px;text-align:right;">359</div>
<div class="g" style="left:159px;top:829px;width:180px;">M. AGUS PURNA IRAWAN, ST</div>
<div class="g" style="left:339px;top:829px;width:40px;text-align:right;color:#9c0006">1</div>
<div class="g" style="left:382px;top:829px;width:40px;text-align:right;color:#9c0006">7</div>
<div class="g" style="left:428px;top:829px;width:68px;text-align:right;color:#9c0006">7</div>
<div class="g" style="left:502px;top:829px;width:106px;">6304052608790001</div>
<svg style="left:499px;top:828px" width="6" height="6" viewBox="0 0 6 6"><path d="M0 0h6L0 6z" fill="#1e7a3c"/></svg>
<div class="g" style="left:612px;top:829px;width:85px;">PIM</div>
<div class="g" style="left:700px;top:829px;width:49px;">K/1</div>
<div class="g" style="left:852px;top:829px;width:102px;text-align:right;">22.299.382,32</div>
<div class="g" style="left:960px;top:829px;width:98px;text-align:right;">1.803.960,00</div>
<div class="g" style="left:1064px;top:829px;width:86px;text-align:right;">964.992,21</div>
<div class="g" style="left:1156px;top:829px;width:96px;text-align:right;">1.157.874,00</div>
<div class="g" style="left:1258px;top:829px;width:71.5px;text-align:right;">-</div>
<div class="g" style="left:1348px;top:829px;width:94px;text-align:right;">486.304,00</div>
<div class="g" style="left:1448px;top:829px;width:81.5px;text-align:right;">-</div>
<div class="g" style="left:1548px;top:829px;width:114px;text-align:right;">25.068.335</div>
<div class="g" style="left:1668px;top:829px;width:105px;text-align:right;">1.157.874</div>
<div class="g" style="left:1779px;top:829px;width:113px;text-align:right;">26.226.209</div>
<div class="g" style="left:101px;top:844px;width:53px;text-align:right;">390</div>
<div class="g" style="left:159px;top:844px;width:180px;">MUCHAMAD CHOIRUL WIBOWO</div>
<div class="g" style="left:339px;top:844px;width:40px;text-align:right;color:#9c0006">6</div>
<div class="g" style="left:382px;top:844px;width:40px;text-align:right;color:#9c0006">7</div>
<div class="g" style="left:428px;top:844px;width:68px;text-align:right;color:#9c0006">7</div>
<div class="g" style="left:502px;top:844px;width:106px;">3578080811950002</div>
<svg style="left:499px;top:843px" width="6" height="6" viewBox="0 0 6 6"><path d="M0 0h6L0 6z" fill="#1e7a3c"/></svg>
<div class="g" style="left:612px;top:844px;width:85px;">BTS SALES</div>
<div class="g" style="left:700px;top:844px;width:49px;">TK/0</div>
<div class="g" style="left:852px;top:844px;width:102px;text-align:right;">3.000.000,00</div>
<div class="g" style="left:964px;top:844px;width:100px;">-</div>
<div class="g" style="left:960px;top:844px;width:98px;text-align:right;">2.280.000,00</div>
<div class="g" style="left:1064px;top:844px;width:73.5px;text-align:right;">-</div>
<div class="g" style="left:1156px;top:844px;width:83.5px;text-align:right;">-</div>
<div class="g" style="left:1258px;top:844px;width:71.5px;text-align:right;">-</div>
<div class="g" style="left:1348px;top:844px;width:81.5px;text-align:right;">-</div>
<div class="g" style="left:1448px;top:844px;width:81.5px;text-align:right;">-</div>
<div class="g" style="left:1548px;top:844px;width:114px;text-align:right;">720.000</div>
<div class="g" style="left:1668px;top:844px;width:92.5px;text-align:right;">-</div>
<div class="g" style="left:1779px;top:844px;width:113px;text-align:right;">720.000</div>
<div class="g" style="left:101px;top:859px;width:53px;text-align:right;">393</div>
<div class="g" style="left:159px;top:859px;width:180px;">MUHAMAD FADLI SAUFI</div>
<div class="g" style="left:339px;top:859px;width:40px;text-align:right;color:#9c0006">5</div>
<div class="g" style="left:382px;top:859px;width:40px;text-align:right;color:#9c0006">7</div>
<div class="g" style="left:428px;top:859px;width:68px;text-align:right;color:#9c0006">7</div>
<div class="g" style="left:502px;top:859px;width:106px;">3175022502050003</div>
<svg style="left:499px;top:858px" width="6" height="6" viewBox="0 0 6 6"><path d="M0 0h6L0 6z" fill="#1e7a3c"/></svg>
<div class="g" style="left:612px;top:859px;width:85px;">BTS SALES</div>
<div class="g" style="left:700px;top:859px;width:49px;">TK/0</div>
<div class="g" style="left:852px;top:859px;width:102px;text-align:right;">6.000.000,00</div>
<div class="g" style="left:964px;top:859px;width:100px;">-</div>
<div class="g" style="left:960px;top:859px;width:98px;text-align:right;">2.103.350,00</div>
<div class="g" style="left:1064px;top:859px;width:73.5px;text-align:right;">-</div>
<div class="g" style="left:1156px;top:859px;width:83.5px;text-align:right;">-</div>
<div class="g" style="left:1258px;top:859px;width:71.5px;text-align:right;">-</div>
<div class="g" style="left:1348px;top:859px;width:81.5px;text-align:right;">-</div>
<div class="g" style="left:1448px;top:859px;width:81.5px;text-align:right;">-</div>
<div class="g" style="left:1548px;top:859px;width:114px;text-align:right;">3.896.650</div>
<div class="g" style="left:1668px;top:859px;width:92.5px;text-align:right;">-</div>
<div class="g" style="left:1779px;top:859px;width:113px;text-align:right;">3.896.650</div>
<div class="g" style="left:101px;top:874px;width:53px;text-align:right;">396</div>
<div class="g" style="left:159px;top:874px;width:180px;">MUHAMAD FIRMAN</div>
<div class="g" style="left:339px;top:874px;width:40px;text-align:right;color:#9c0006">1</div>
<div class="g" style="left:382px;top:874px;width:40px;text-align:right;color:#9c0006">7</div>
<div class="g" style="left:428px;top:874px;width:68px;text-align:right;color:#9c0006">7</div>
<div class="g" style="left:502px;top:874px;width:106px;">3601120710040004</div>
<svg style="left:499px;top:873px" width="6" height="6" viewBox="0 0 6 6"><path d="M0 0h6L0 6z" fill="#1e7a3c"/></svg>
<div class="g" style="left:612px;top:874px;width:85px;">BTS SALES</div>
<div class="g" style="left:700px;top:874px;width:49px;">TK/0</div>
<div class="g" style="left:852px;top:874px;width:102px;text-align:right;">21.000.000,00</div>
<div class="g" style="left:964px;top:874px;width:100px;">-</div>
<div class="g" style="left:960px;top:874px;width:98px;text-align:right;">2.995.498,00</div>
<div class="g" style="left:1064px;top:874px;width:73.5px;text-align:right;">-</div>
<div class="g" style="left:1156px;top:874px;width:96px;text-align:right;">100.000,00</div>
<div class="g" style="left:1258px;top:874px;width:71.5px;text-align:right;">-</div>
<div class="g" style="left:1348px;top:874px;width:81.5px;text-align:right;">-</div>
<div class="g" style="left:1448px;top:874px;width:81.5px;text-align:right;">-</div>
<div class="g" style="left:1548px;top:874px;width:114px;text-align:right;">18.004.502</div>
<div class="g" style="left:1668px;top:874px;width:105px;text-align:right;">100.000</div>
<div class="g" style="left:1779px;top:874px;width:113px;text-align:right;">18.104.502</div>
<div class="g" style="left:101px;top:889px;width:53px;text-align:right;">401</div>
<div class="g" style="left:159px;top:889px;width:180px;">MUHAMAD NUR HOVID</div>
<div class="g" style="left:339px;top:889px;width:40px;text-align:right;color:#9c0006">4</div>
<div class="g" style="left:382px;top:889px;width:40px;text-align:right;color:#9c0006">7</div>
<div class="g" style="left:428px;top:889px;width:68px;text-align:right;color:#9c0006">7</div>
<div class="g" style="left:502px;top:889px;width:106px;color:#9c0006">3101022503940003</div>
<svg style="left:499px;top:888px" width="6" height="6" viewBox="0 0 6 6"><path d="M0 0h6L0 6z" fill="#1e7a3c"/></svg>
<div class="g" style="left:612px;top:889px;width:85px;">BTS OPS</div>
<div class="g" style="left:700px;top:889px;width:49px;">K/2</div>
<div class="g" style="left:852px;top:889px;width:102px;text-align:right;">19.587.044,00</div>
<div class="g" style="left:960px;top:889px;width:98px;text-align:right;">1.982.390,00</div>
<div class="g" style="left:1064px;top:889px;width:86px;text-align:right;">115.405,51</div>
<div class="g" style="left:1156px;top:889px;width:83.5px;text-align:right;">-</div>
<div class="g" style="left:1258px;top:889px;width:71.5px;text-align:right;">-</div>
<div class="g" style="left:1348px;top:889px;width:94px;text-align:right;">427.423,00</div>
<div class="g" style="left:1448px;top:889px;width:81.5px;text-align:right;">-</div>
<div class="g" style="left:1548px;top:889px;width:114px;text-align:right;">21.684.840</div>
<div class="g" style="left:1668px;top:889px;width:92.5px;text-align:right;">-</div>
<div class="g" style="left:1779px;top:889px;width:113px;text-align:right;">21.684.840</div>
<div class="g" style="left:101px;top:904px;width:53px;text-align:right;">409</div>
<div class="g" style="left:159px;top:904px;width:180px;">MUHAMMAD ARIFIN</div>
<div class="g" style="left:339px;top:904px;width:40px;text-align:right;color:#9c0006">1</div>
<div class="g" style="left:382px;top:904px;width:40px;text-align:right;color:#9c0006">7</div>
<div class="g" style="left:428px;top:904px;width:68px;text-align:right;color:#9c0006">7</div>
<div class="g" style="left:502px;top:904px;width:106px;">3276050704870015</div>
<svg style="left:499px;top:903px" width="6" height="6" viewBox="0 0 6 6"><path d="M0 0h6L0 6z" fill="#1e7a3c"/></svg>
<div class="g" style="left:612px;top:904px;width:85px;">BTS OPS</div>
<div class="g" style="left:700px;top:904px;width:49px;">K/2</div>
<div class="g" style="left:852px;top:904px;width:102px;text-align:right;">31.812.909,00</div>
<div class="g" style="left:964px;top:904px;width:100px;">-</div>
<div class="g" style="left:960px;top:904px;width:98px;text-align:right;">202.631,00</div>
<div class="g" style="left:1064px;top:904px;width:86px;text-align:right;">162.033,04</div>
<div class="g" style="left:1156px;top:904px;width:96px;text-align:right;">5.396.761,00</div>
<div class="g" style="left:1258px;top:904px;width:84px;text-align:right;">224.853,30</div>
<div class="g" style="left:1348px;top:904px;width:94px;text-align:right;">600.119,00</div>
<div class="g" style="left:1448px;top:904px;width:81.5px;text-align:right;">-</div>
<div class="g" style="left:1548px;top:904px;width:114px;text-align:right;">31.772.311</div>
<div class="g" style="left:1668px;top:904px;width:105px;text-align:right;">5.396.761</div>
<div class="g" style="left:1779px;top:904px;width:113px;text-align:right;">37.169.072</div>
<div class="g" style="left:101px;top:919px;width:53px;text-align:right;">416</div>
<div class="g" style="left:159px;top:919px;width:180px;">MUHAMMAD FAIZ AULIANSYAH</div>
<div class="g" style="left:339px;top:919px;width:40px;text-align:right;color:#9c0006">5</div>
<div class="g" style="left:382px;top:919px;width:40px;text-align:right;color:#9c0006">7</div>
<div class="g" style="left:428px;top:919px;width:68px;text-align:right;color:#9c0006">7</div>
<div class="g" style="left:502px;top:919px;width:106px;">3171071207061002</div>
<svg style="left:499px;top:918px" width="6" height="6" viewBox="0 0 6 6"><path d="M0 0h6L0 6z" fill="#1e7a3c"/></svg>
<div class="g" style="left:612px;top:919px;width:85px;">BTS SALES</div>
<div class="g" style="left:700px;top:919px;width:49px;">TK/0</div>
<div class="g" style="left:852px;top:919px;width:102px;text-align:right;">9.000.000,00</div>
<div class="g" style="left:964px;top:919px;width:100px;">-</div>
<div class="g" style="left:960px;top:919px;width:98px;text-align:right;">2.136.750,00</div>
<div class="g" style="left:1064px;top:919px;width:73.5px;text-align:right;">-</div>
<div class="g" style="left:1156px;top:919px;width:83.5px;text-align:right;">-</div>
<div class="g" style="left:1258px;top:919px;width:71.5px;text-align:right;">-</div>
<div class="g" style="left:1348px;top:919px;width:81.5px;text-align:right;">-</div>
<div class="g" style="left:1448px;top:919px;width:81.5px;text-align:right;">-</div>
<div class="g" style="left:1548px;top:919px;width:114px;text-align:right;">6.863.250</div>
<div class="g" style="left:1668px;top:919px;width:92.5px;text-align:right;">-</div>
<div class="g" style="left:1779px;top:919px;width:113px;text-align:right;">6.863.250</div>
<div class="g" style="left:101px;top:934px;width:53px;text-align:right;">421</div>
<div class="g" style="left:159px;top:934px;width:180px;">MUHAMMAD FAREL SETIAWAN</div>
<div class="g" style="left:339px;top:934px;width:40px;text-align:right;color:#9c0006">7</div>
<div class="g" style="left:382px;top:934px;width:40px;text-align:right;color:#9c0006">7</div>
<div class="g" style="left:428px;top:934px;width:68px;text-align:right;color:#9c0006">7</div>
<div class="g" style="left:502px;top:934px;width:106px;">3276052801070007</div>
<svg style="left:499px;top:933px" width="6" height="6" viewBox="0 0 6 6"><path d="M0 0h6L0 6z" fill="#1e7a3c"/></svg>
<div class="g" style="left:612px;top:934px;width:85px;">BTS SALES</div>
<div class="g" style="left:700px;top:934px;width:49px;">TK/0</div>
<div class="g" style="left:852px;top:934px;width:102px;text-align:right;">3.000.000,00</div>
<div class="g" style="left:964px;top:934px;width:100px;">-</div>
<div class="g" style="left:960px;top:934px;width:98px;text-align:right;">2.520.000,00</div>
<div class="g" style="left:1064px;top:934px;width:73.5px;text-align:right;">-</div>
<div class="g" style="left:1156px;top:934px;width:83.5px;text-align:right;">-</div>
<div class="g" style="left:1258px;top:934px;width:71.5px;text-align:right;">-</div>
<div class="g" style="left:1348px;top:934px;width:81.5px;text-align:right;">-</div>
<div class="g" style="left:1448px;top:934px;width:81.5px;text-align:right;">-</div>
<div class="g" style="left:1548px;top:934px;width:114px;text-align:right;">480.000</div>
<div class="g" style="left:1668px;top:934px;width:92.5px;text-align:right;">-</div>
<div class="g" style="left:1779px;top:934px;width:113px;text-align:right;">480.000</div>
<div class="g" style="left:101px;top:949px;width:53px;text-align:right;">428</div>
<div class="g" style="left:159px;top:949px;width:180px;">MUHAMMAD FUAD</div>
<div class="g" style="left:339px;top:949px;width:40px;text-align:right;color:#9c0006">1</div>
<div class="g" style="left:382px;top:949px;width:40px;text-align:right;color:#9c0006">7</div>
<div class="g" style="left:428px;top:949px;width:68px;text-align:right;color:#9c0006">7</div>
<div class="g" style="left:502px;top:949px;width:106px;">3175091201910005</div>
<svg style="left:499px;top:948px" width="6" height="6" viewBox="0 0 6 6"><path d="M0 0h6L0 6z" fill="#1e7a3c"/></svg>
<div class="g" style="left:612px;top:949px;width:85px;">PIM</div>
<div class="g" style="left:700px;top:949px;width:49px;">K/1</div>
<div class="g" style="left:852px;top:949px;width:102px;text-align:right;">32.015.604,00</div>
<div class="g" style="left:964px;top:949px;width:100px;">-</div>
<div class="g" style="left:960px;top:949px;width:98px;text-align:right;">2.396.760,00</div>
<div class="g" style="left:1064px;top:949px;width:86px;text-align:right;">1.461.916,04</div>
<div class="g" style="left:1156px;top:949px;width:96px;text-align:right;">5.396.761,00</div>
<div class="g" style="left:1258px;top:949px;width:84px;text-align:right;">216.453,30</div>
<div class="g" style="left:1348px;top:949px;width:94px;text-align:right;">617.388,00</div>
<div class="g" style="left:1448px;top:949px;width:81.5px;text-align:right;">-</div>
<div class="g" style="left:1548px;top:949px;width:114px;text-align:right;">31.080.760</div>
<div class="g" style="left:1668px;top:949px;width:105px;text-align:right;">5.396.761</div>
<div class="g" style="left:1779px;top:949px;width:113px;text-align:right;">36.477.521</div>
<div class="g" style="left:101px;top:964px;width:53px;text-align:right;">432</div>
<div class="g" style="left:159px;top:964px;width:180px;">MUHAMMAD HAFIDZULHAQ</div>
<div class="g" style="left:339px;top:964px;width:40px;text-align:right;color:#9c0006">1</div>
<div class="g" style="left:382px;top:964px;width:40px;text-align:right;color:#9c0006">7</div>
<div class="g" style="left:428px;top:964px;width:68px;text-align:right;color:#9c0006">7</div>
<div class="g" style="left:502px;top:964px;width:106px;">3174010911990006</div>
<svg style="left:499px;top:963px" width="6" height="6" viewBox="0 0 6 6"><path d="M0 0h6L0 6z" fill="#1e7a3c"/></svg>
<div class="g" style="left:612px;top:964px;width:85px;">PIM</div>
<div class="g" style="left:700px;top:964px;width:49px;">TK/0</div>
<div class="g" style="left:852px;top:964px;width:102px;text-align:right;">34.277.327,00</div>
<div class="g" style="left:964px;top:964px;width:100px;">-</div>
<div class="g" style="left:960px;top:964px;width:98px;text-align:right;">1.482.632,00</div>
<div class="g" style="left:1064px;top:964px;width:86px;text-align:right;">173.690,04</div>
<div class="g" style="left:1156px;top:964px;width:96px;text-align:right;">899.460,00</div>
<div class="g" style="left:1258px;top:964px;width:84px;text-align:right;">149.367,20</div>
<div class="g" style="left:1348px;top:964px;width:94px;text-align:right;">643.293,00</div>
<div class="g" style="left:1448px;top:964px;width:81.5px;text-align:right;">-</div>
<div class="g" style="left:1548px;top:964px;width:114px;text-align:right;">32.968.385</div>
<div class="g" style="left:1668px;top:964px;width:105px;text-align:right;">899.460</div>
<div class="g" style="left:1779px;top:964px;width:113px;text-align:right;">33.867.845</div>
<svg style="left:1773px;top:873px" width="6" height="6" viewBox="0 0 6 6"><path d="M0 0h6v6z" fill="#e00"/></svg>
<div style="left:1155px;top:707px;width:105px;height:17px;border:2px solid #1f6e46"></div>
<div style="left:1256px;top:721px;width:6px;height:6px;background:#1f6e46;border:1px solid #fff"></div>
<div style="left:0px;top:978px;width:1920px;height:32px;background:#0f0d0c"></div>
<svg style="left:27px;top:988px" width="10" height="12" viewBox="0 0 10 12"><path d="M7.5 1.5L2.5 6l5 4.5" fill="none" stroke="#b8b8b8" stroke-width="1.3"/></svg>
<svg style="left:59px;top:988px" width="10" height="12" viewBox="0 0 10 12"><path d="M2.5 1.5L7.5 6l-5 4.5" fill="none" stroke="#b8b8b8" stroke-width="1.3"/></svg>
<div style="left:90px;top:992px;width:3px;height:3px;background:#ddd;border-radius:50%"></div>
<div style="left:95px;top:992px;width:3px;height:3px;background:#ddd;border-radius:50%"></div>
<div style="left:100px;top:992px;width:3px;height:3px;background:#ddd;border-radius:50%"></div>
<div style="left:116px;top:982px;width:237px;height:24px;background:#ffff00;border-radius:4px"></div>
<div class="t" style="left:127.00px;top:987.25px;font-size:14px;line-height:14px;color:#111;transform:scaleX(0.8919);transform-origin:0 0;">FIX JAN-DES (REVISI) IMPOR CORE</div>
<div style="left:357px;top:986px;width:1px;height:18px;background:#555"></div>
<div style="left:362px;top:982px;width:31px;height:24px;background:#ffff00;border-radius:4px"></div>
<div class="t" style="left:368.50px;top:987.25px;font-size:14px;line-height:14px;color:#111;transform:scaleX(0.8739);transform-origin:0 0;">1.1</div>
<div style="left:397px;top:986px;width:1px;height:18px;background:#555"></div>
<div style="left:402px;top:982px;width:125px;height:24px;background:#ffff00;border-radius:4px"></div>
<div class="t" style="left:411.00px;top:987.25px;font-size:14px;line-height:14px;color:#111;transform:scaleX(0.9053);transform-origin:0 0;">BP21-KARTAP PB</div>
<div style="left:531px;top:986px;width:1px;height:18px;background:#555"></div>
<div style="left:535px;top:982px;width:109px;height:24px;background:#ffff00;border-radius:4px"></div>
<div class="t" style="left:542.60px;top:987.25px;font-size:14px;line-height:14px;color:#111;transform:scaleX(0.9025);transform-origin:0 0;">A1- RESIGN PB</div>
<div style="left:648px;top:986px;width:1px;height:18px;background:#555"></div>
<div style="left:652px;top:978px;width:152px;height:28px;background:linear-gradient(180deg,#fdf6f6 0%,#f9dcdc 50%,#f4baba 100%);border-radius:0 0 6px 6px"></div>
<div class="t" style="left:661.60px;top:984.25px;font-size:14px;line-height:14px;color:#3a2828;transform:scaleX(0.9122);transform-origin:0 0;">FIX JAN-DES (REVISI)</div>
<div style="left:661px;top:1001px;width:134px;height:2px;background:#3f4a38"></div>
<div style="left:807px;top:986px;width:1px;height:18px;background:#555"></div>
<div class="t" style="left:821.50px;top:987.25px;font-size:14px;line-height:14px;color:#fff;transform:scaleX(0.9211);transform-origin:0 0;">Resume</div>
<div style="left:883px;top:986px;width:1px;height:18px;background:#555"></div>
<div style="left:887px;top:982px;width:100px;height:24px;background:#3a8da3;border-radius:4px"></div>
<div class="t" style="left:897.00px;top:987.25px;font-size:14px;line-height:14px;color:#fff;transform:scaleX(0.9166);transform-origin:0 0;">ALL SUMARY</div>
<div style="left:992px;top:986px;width:1px;height:18px;background:#555"></div>
<div style="left:996px;top:982px;width:64px;height:24px;background:#f21b1b;border-radius:4px"></div>
<div class="t" style="left:1005.70px;top:987.25px;font-size:14px;line-height:14px;color:#fff;transform:scaleX(0.8568);transform-origin:0 0;">RESIGN</div>
<div style="left:1065px;top:986px;width:1px;height:18px;background:#555"></div>
<div class="t" style="left:1077.00px;top:987.25px;font-size:14px;line-height:14px;color:#fff;transform:scaleX(0.9495);transform-origin:0 0;">12. PIM</div>
<div class="t" style="left:1148.00px;top:987.25px;font-size:14px;line-height:14px;color:#fff;transform:scaleX(0.8805);transform-origin:0 0;">12. BTS OPS</div>
<div class="t" style="left:1248.00px;top:987.25px;font-size:14px;line-height:14px;color:#fff;transform:scaleX(0.8673);transform-origin:0 0;">12. BTS SALES</div>
<div class="t" style="left:1359.50px;top:987.25px;font-size:14px;line-height:14px;color:#fff;transform:scaleX(0.8978);transform-origin:0 0;">12. RAR</div>
<div class="t" style="left:1433.50px;top:987.25px;font-size:14px;line-height:14px;color:#fff;transform:scaleX(0.9352);transform-origin:0 0;">12. OS LAIN</div>
<div class="t" style="left:1535.30px;top:987.25px;font-size:14px;line-height:14px;color:#fff;transform:scaleX(0.9175);transform-origin:0 0;">12. TELKOM</div>
<div style="left:1135px;top:986px;width:1px;height:18px;background:#555"></div>
<div style="left:1235px;top:986px;width:1px;height:18px;background:#555"></div>
<div style="left:1347px;top:986px;width:1px;height:18px;background:#555"></div>
<div style="left:1420px;top:986px;width:1px;height:18px;background:#555"></div>
<div style="left:1523px;top:986px;width:1px;height:18px;background:#555"></div>
<div style="left:1623px;top:986px;width:1px;height:18px;background:#555"></div>
<svg style="left:1663px;top:987px" width="14" height="14" viewBox="0 0 14 14"><path d="M7 1v12M1 7h12" stroke="#ddd" stroke-width="1.3"/></svg>
<div style="left:1704px;top:989px;width:2.5px;height:2.5px;background:#ddd;border-radius:50%"></div>
<div style="left:1704px;top:994px;width:2.5px;height:2.5px;background:#ddd;border-radius:50%"></div>
<div style="left:1704px;top:999px;width:2.5px;height:2.5px;background:#ddd;border-radius:50%"></div>
<svg style="left:1727px;top:988px" width="8" height="12" viewBox="0 0 8 12"><path d="M7 1L1 6l6 5z" fill="#bbb"/></svg>
<div style="left:1815px;top:989px;width:18px;height:9px;background:#aaa;border-radius:5px"></div>
<svg style="left:1885px;top:988px" width="8" height="12" viewBox="0 0 8 12"><path d="M1 1l6 5-6 5z" fill="#bbb"/></svg>
<div style="left:0px;top:1010px;width:1920px;height:22px;background:#151312"></div>
<div style="left:0px;top:1010px;width:1920px;height:1px;background:#3c3a38"></div>
<div class="t" style="left:11.30px;top:1016.22px;font-size:12px;line-height:12px;color:#f0f0f0;transform:scaleX(0.8937);transform-origin:0 0;">Ready</div>
<div class="t" style="left:58.20px;top:1016.22px;font-size:12px;line-height:12px;color:#f0f0f0;transform:scaleX(0.9831);transform-origin:0 0;">Filter Mode</div>
<div class="t" style="left:133.60px;top:1016.22px;font-size:12px;line-height:12px;color:#f0f0f0;transform:scaleX(0.9194);transform-origin:0 0;">Calculate</div>
<svg style="left:199px;top:1013px" width="16" height="16" viewBox="0 0 16 16"><circle cx="8" cy="3" r="2" fill="none" stroke="#ddd" stroke-width="1.1"/><path d="M2 6l6 1 6-1M8 7v3l-3 5M8 10l3 5" fill="none" stroke="#ddd" stroke-width="1.1"/><path d="M10 11l5 4M15 11l-5 4" stroke="#ddd" stroke-width="1.1"/></svg>
<div class="t" style="left:218.60px;top:1015.72px;font-size:12px;line-height:12px;color:#f0f0f0;font-weight:bold;transform:scaleX(0.8790);transform-origin:0 0;">Accessibility: Investigate</div>
<div style="left:1626px;top:1011px;width:39px;height:21px;background:#2a2827"></div>
<svg style="left:1637px;top:1013px" width="16" height="16" viewBox="0 0 16 16"><rect x="1.5" y="1.5" width="13" height="13" fill="none" stroke="#ddd" stroke-width="1.1"/><path d="M1.5 5.5h13M1.5 9.5h13M5.5 1.5v13M9.5 1.5v13" stroke="#ddd" stroke-width="1"/></svg>
<svg style="left:1677px;top:1013px" width="16" height="16" viewBox="0 0 16 16"><rect x="1.5" y="1.5" width="13" height="13" fill="none" stroke="#ddd" stroke-width="1.1"/><rect x="4" y="4" width="8" height="8" fill="none" stroke="#ddd" stroke-width="1"/><path d="M5.5 6.5h5M5.5 8.5h5" stroke="#ddd"/></svg>
<svg style="left:1717px;top:1013px" width="16" height="16" viewBox="0 0 16 16"><rect x="1.5" y="1.5" width="13" height="13" fill="none" stroke="#ddd" stroke-width="1.1"/><path d="M6 1.5v6h4v-6M1.5 10h13" fill="none" stroke="#ddd" stroke-width="1.1"/></svg>
<div style="left:1750px;top:1021px;width:9px;height:1px;background:#ddd"></div>
<div style="left:1765px;top:1021px;width:100px;height:1px;background:#888"></div>
<div style="left:1805px;top:1015px;width:5px;height:12px;background:#bbb;border-radius:1px"></div>
<div style="left:1815px;top:1018px;width:1px;height:7px;background:#888"></div>
<svg style="left:1868px;top:1016px" width="11" height="11" viewBox="0 0 11 11"><path d="M5.5 0v11M0 5.5h11" stroke="#ddd" stroke-width="1.1"/></svg>
<div class="t" style="left:1892.00px;top:1016.22px;font-size:12px;line-height:12px;color:#f0f0f0;transform:scaleX(0.8744);transform-origin:0 0;">86%</div>
<div style="left:0px;top:1032px;width:1920px;height:48px;background:linear-gradient(90deg,#201d1b 0%,#241e19 35%,#221e1c 58%,#1d1f22 68%,#1e2023 90%,#29221b 100%)"></div>
<div style="left:0px;top:1032px;width:1920px;height:1px;background:#3d3731"></div>
<svg style="left:18px;top:1036px" width="32" height="34" viewBox="0 0 32 34"><path d="M8 11l12-3 4 20-12 3z" fill="#f2a81d"/><path d="M4 15h8M4 19.5h8M4 24h8" stroke="#f5b93a" stroke-width="2"/><path d="M10 14h9M10 18.5h10M11 23h10" stroke="#d08a10" stroke-width="1"/><circle cx="21" cy="9.5" r="7.5" fill="#f3939f"/><text x="21" y="13.5" font-size="11" fill="#1a1a1a" text-anchor="middle" font-family="Liberation Sans">1</text></svg>
<div class="t" style="left:50.30px;top:1041.97px;font-size:12.5px;line-height:12.5px;color:#f0f0f0;transform:scaleX(0.9275);transform-origin:0 0;">Udara: Sedang</div>
<div class="t" style="left:50.30px;top:1057.97px;font-size:12.5px;line-height:12.5px;color:#cfcfcf;transform:scaleX(0.9522);transform-origin:0 0;">Senin Berikutnya</div>
<svg style="left:638px;top:1044px" width="25" height="25" viewBox="0 0 25 25"><rect x="0" y="0" width="11.5" height="11.5" rx="1" fill="#48b6f0"/><rect x="13" y="0" width="11.5" height="11.5" rx="1" fill="#48b6f0"/><rect x="0" y="13" width="11.5" height="11.5" rx="1" fill="#2b9ae8"/><rect x="13" y="13" width="11.5" height="11.5" rx="1" fill="#2b9ae8"/></svg>
<div style="left:675px;top:1040px;width:219px;height:32px;background:linear-gradient(90deg,#3a3532 0%,#3f3935 60%,#4a4039 100%);border-radius:16px;border:1px solid #57504a"></div>
<svg style="left:685px;top:1047px" width="18" height="18" viewBox="0 0 18 18"><circle cx="8" cy="8" r="6" fill="none" stroke="#eee" stroke-width="1.6"/><path d="M12.5 12.5l4 4" stroke="#eee" stroke-width="1.8"/></svg>
<div class="t" style="left:712.00px;top:1049.25px;font-size:14px;line-height:14px;color:#cfcfcf;transform:scaleX(0.9246);transform-origin:0 0;">Search</div>
<svg style="left:844px;top:1040px" width="46" height="32" viewBox="0 0 46 32"><ellipse cx="23" cy="26" rx="21" ry="3.2" fill="#dccaa4"/><path d="M6 9l5-4 4 1 5 5 h12c3 0 5 2 5 5v4h-2l-1 6h-2l-1-6H19l-1 7h-2l-1-7-3-4-3-2-3 0z" fill="#e4e0ea"/><path d="M12 6l2 6M15 7l2 6M19 11l1 8M23 11l0 8M27 11l-1 8M31 11l-1 8M35 13l-2 6M8 8l3 3" stroke="#3a3152" stroke-width="1.3"/></svg>
<svg style="left:907px;top:1045px" width="26" height="24" viewBox="0 0 26 24"><rect x="1" y="6" width="16" height="14" rx="2" fill="#6a6a6a"/><rect x="8" y="1" width="16" height="14" rx="2" fill="#e8e8e8"/><rect x="5" y="4" width="12" height="12" fill="#aaa"/></svg>
<svg style="left:950px;top:1044px" width="26" height="24" viewBox="0 0 26 24"><path d="M1 3h9l2 3h13v16H1z" fill="#f5c542"/><rect x="1" y="8" width="24" height="14" rx="1" fill="#ffd862"/><rect x="6" y="13" width="14" height="9" rx="2" fill="#1e8ae0"/></svg>
<div style="left:960px;top:1073px;width:7px;height:3px;background:#9a9a9a;border-radius:2px"></div>
<svg style="left:995px;top:1043px" width="26" height="26" viewBox="0 0 26 26"><circle cx="13" cy="13" r="12" fill="#1e90d8"/><path d="M3 15c2-10 20-10 20 0-1 3-6 3-8 1 3-4-2-7-6-5-3 2-2 8 3 10-6 2-9-2-9-6z" fill="#54d16c" opacity="0.9"/><path d="M13 9c6 0 8 4 7 6-3 2-6 0-5-2" fill="#2470c8"/></svg>
<svg style="left:1040px;top:1043px" width="26" height="26" viewBox="0 0 26 26"><rect x="1" y="6" width="24" height="19" rx="2" fill="#f0f0f0"/><path d="M8 6V4a5 3 0 0 1 10 0v2" fill="none" stroke="#38a0f0" stroke-width="1.5"/><rect x="8" y="11" width="4.5" height="4.5" fill="#f25022"/><rect x="13.5" y="11" width="4.5" height="4.5" fill="#7fba00"/><rect x="8" y="16.5" width="4.5" height="4.5" fill="#00a4ef"/><rect x="13.5" y="16.5" width="4.5" height="4.5" fill="#ffb900"/></svg>
<svg style="left:1083px;top:1043px" width="26" height="26" viewBox="0 0 26 26"><circle cx="13" cy="12.5" r="10.5" fill="none" stroke="#25d366" stroke-width="2.2"/><path d="M3 24l2-6 4 4z" fill="#25d366"/><path d="M9 8c0 5 4 9 9 9l1-2-3-1-1 1c-2-1-3-2-4-4l1-1-1-3-2 1z" fill="#25d366"/></svg>
<svg style="left:1128px;top:1043px" width="26" height="26" viewBox="0 0 26 26"><circle cx="13" cy="13" r="12" fill="#db4437"/><path d="M13 13L2.6 7A12 12 0 0 1 24.4 7z" fill="#db4437"/><path d="M13 13l-10.4-6A12 12 0 0 0 13 25z" fill="#0f9d58"/><path d="M13 13l10.4-6A12 12 0 0 1 13 25z" fill="#f4b400"/><circle cx="13" cy="13" r="5.5" fill="#fff"/><circle cx="13" cy="13" r="4.2" fill="#4285f4"/></svg>
<div style="left:1137px;top:1073px;width:7px;height:3px;background:#9a9a9a;border-radius:2px"></div>
<svg style="left:1170px;top:1043px" width="26" height="26" viewBox="0 0 26 26"><circle cx="13" cy="13" r="12" fill="#e8384f"/><path d="M7 20l6-14 6 14M10 15h6" fill="none" stroke="#fff" stroke-width="2"/></svg>
<svg style="left:1215px;top:1044px" width="25" height="24" viewBox="0 0 25 24"><rect x="0" y="0" width="25" height="24" fill="#e8443a"/><path d="M12.5 5l7 7-7 7-7-7z" fill="#fff"/><path d="M12.5 9l3 3-3 3-3-3z" fill="#e8443a"/></svg>
<div style="left:1253px;top:1036px;width:36px;height:40px;background:#2f2c2a;border-radius:4px;border:1px solid #3c3835"></div>
<svg style="left:1257px;top:1043px" width="27" height="26" viewBox="0 0 27 26"><rect x="6" y="1" width="20" height="24" rx="2" fill="#107c41"/><rect x="6" y="1" width="20" height="8" rx="2" fill="#33c481"/><rect x="6" y="9" width="20" height="8" fill="#21a366"/><rect x="1" y="7" width="13" height="13" rx="2" fill="#185c37"/><text x="7.5" y="17" font-size="10" font-weight="bold" fill="#fff" text-anchor="middle" font-family="Liberation Sans">X</text></svg>
<div style="left:1264px;top:1071px;width:16px;height:3px;background:#4cc2ff;border-radius:2px"></div>
<svg style="left:1695px;top:1050px" width="13" height="8" viewBox="0 0 13 8"><path d="M1 7l5.5-5.5L12 7" fill="none" stroke="#eee" stroke-width="1.4"/></svg>
<svg style="left:1724px;top:1046px" width="22" height="18" viewBox="0 0 22 18"><path d="M4 15h12a4 4 0 0 0 0-8 6 6 0 0 0-11 1 3.5 3.5 0 0 0-1 7z" fill="#8a8a8a"/><path d="M3 2l16 15" stroke="#1e2023" stroke-width="2.5"/><path d="M3 2l16 15" stroke="#c8c8c8" stroke-width="1.1"/></svg>
<svg style="left:1756px;top:1045px" width="20" height="20" viewBox="0 0 20 20"><rect x="1" y="3" width="14" height="10" fill="none" stroke="#eee" stroke-width="1.2"/><path d="M5 17h6M8 13v4" stroke="#eee" stroke-width="1.2"/><rect x="13" y="1" width="6" height="10" fill="#1c1c1c" stroke="#eee" stroke-width="1.1"/></svg>
<svg style="left:1781px;top:1046px" width="20" height="18" viewBox="0 0 20 18"><path d="M2 6h4l5-4v14l-5-4H2z" fill="none" stroke="#eee" stroke-width="1.2"/><path d="M14 6c1.5 1.5 1.5 4.5 0 6M16.5 4c3 3 3 7 0 10" fill="none" stroke="#eee" stroke-width="1.2"/></svg>
<div class="t" style="left:1848.50px;top:1041.97px;font-size:12.5px;line-height:12.5px;color:#f0f0f0;transform:scaleX(0.8951);transform-origin:0 0;">10:15</div>
<div class="t" style="left:1815.00px;top:1057.97px;font-size:12.5px;line-height:12.5px;color:#f0f0f0;transform:scaleX(0.9830);transform-origin:0 0;">31/01/2026</div>
<svg style="left:1886px;top:1046px" width="16" height="18" viewBox="0 0 16 18"><path d="M3 13V8a5 5 0 0 1 10 0v5l2 2H1z" fill="#86d9f2"/><path d="M6 16a2 2 0 0 0 4 0" fill="#86d9f2"/></svg>
</body></html>
